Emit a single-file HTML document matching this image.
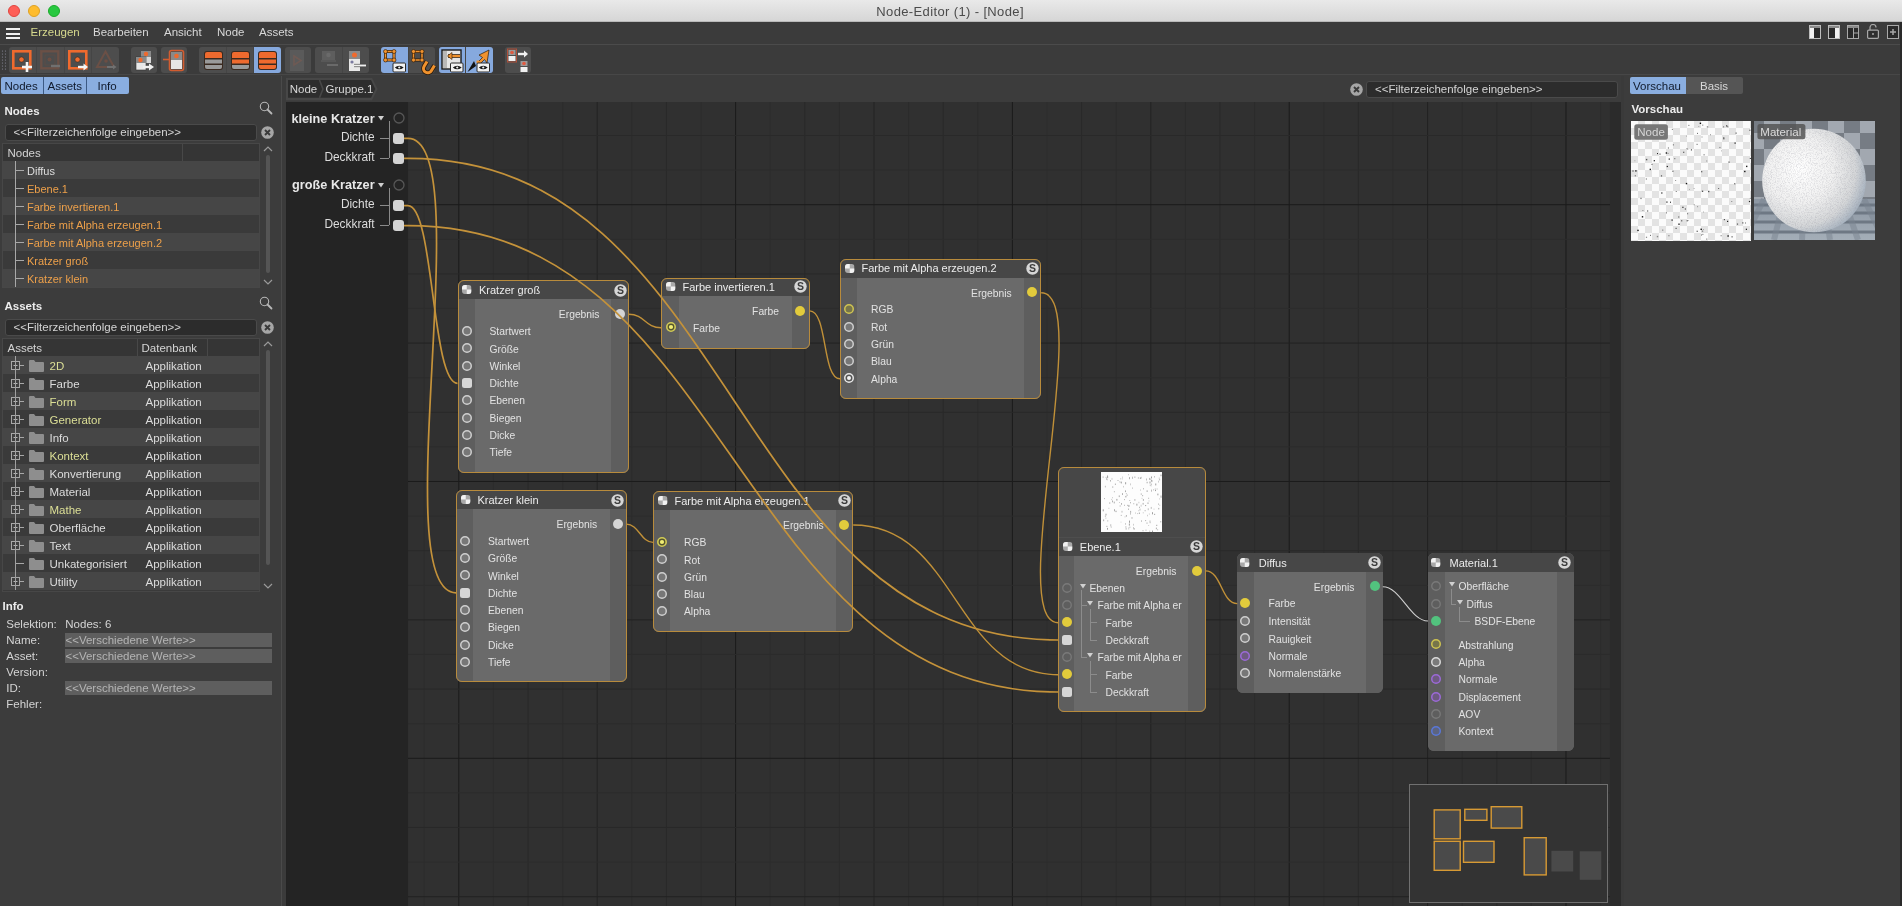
<!DOCTYPE html>
<html><head><meta charset="utf-8"><title>Node-Editor</title>
<style>
html,body{margin:0;padding:0;}
body{width:1902px;height:906px;overflow:hidden;position:relative;background:#3c3c3c;font-family:"Liberation Sans", sans-serif;}
div{box-sizing:border-box;}
#root{position:absolute;left:0;top:0;width:1902px;height:906px;overflow:hidden;will-change:transform;}
</style></head><body><div id="root">
<div style="position:absolute;left:0px;top:0px;width:1902px;height:22px;background:linear-gradient(#e9e9e9,#d6d6d6);border-bottom:1px solid #b9b9b9;"></div><div style="position:absolute;left:8px;top:5px;width:12px;height:12px;border-radius:50%;background:#fe5f57;border:0.5px solid #e0443e;"></div><div style="position:absolute;left:28px;top:5px;width:12px;height:12px;border-radius:50%;background:#febc2e;border:0.5px solid #dea123;"></div><div style="position:absolute;left:48px;top:5px;width:12px;height:12px;border-radius:50%;background:#28c840;border:0.5px solid #1aab29;"></div><div style="position:absolute;left:876.3px;top:4.50px;font-size:13px;line-height:13px;height:13px;color:#4b4b4b;font-weight:normal;white-space:nowrap;letter-spacing:0.37px;">Node-Editor (1) - [Node]</div><div style="position:absolute;left:0px;top:22px;width:1902px;height:22px;background:#3b3b3b;"></div><div style="position:absolute;left:6px;top:28px;width:14px;height:2px;background:#f0f0f0;"></div><div style="position:absolute;left:6px;top:32.5px;width:14px;height:2px;background:#f0f0f0;"></div><div style="position:absolute;left:6px;top:37px;width:14px;height:2px;background:#f0f0f0;"></div><div style="position:absolute;left:30.5px;top:27.17px;font-size:11.5px;line-height:11.5px;height:11.5px;color:#d6d98e;font-weight:normal;white-space:nowrap;">Erzeugen</div><div style="position:absolute;left:93px;top:27.17px;font-size:11.5px;line-height:11.5px;height:11.5px;color:#d8d8d8;font-weight:normal;white-space:nowrap;">Bearbeiten</div><div style="position:absolute;left:164px;top:27.17px;font-size:11.5px;line-height:11.5px;height:11.5px;color:#d8d8d8;font-weight:normal;white-space:nowrap;">Ansicht</div><div style="position:absolute;left:217px;top:27.17px;font-size:11.5px;line-height:11.5px;height:11.5px;color:#d8d8d8;font-weight:normal;white-space:nowrap;">Node</div><div style="position:absolute;left:259px;top:27.17px;font-size:11.5px;line-height:11.5px;height:11.5px;color:#d8d8d8;font-weight:normal;white-space:nowrap;">Assets</div><div style="position:absolute;left:0px;top:44px;width:1902px;height:1px;background:#4b4b4b;"></div><svg width="12" height="14" style="position:absolute;left:1809px;top:25px"><rect x="0.5" y="0.5" width="11" height="13" fill="#2a2a2a" stroke="#bdbdbd"/><rect x="1" y="1" width="10" height="2" fill="#8a8a8a"/><rect x="1" y="3" width="4" height="10" fill="#f2f2f2"/></svg><svg width="12" height="14" style="position:absolute;left:1828px;top:25px"><rect x="0.5" y="0.5" width="11" height="13" fill="#2a2a2a" stroke="#bdbdbd"/><rect x="1" y="1" width="10" height="2" fill="#8a8a8a"/><rect x="7" y="3" width="4" height="10" fill="#f2f2f2"/></svg><svg width="12" height="14" style="position:absolute;left:1847px;top:25px"><rect x="0.5" y="0.5" width="11" height="13" fill="#2a2a2a" stroke="#a8a8a8"/><line x1="6.5" y1="3" x2="6.5" y2="13" stroke="#a8a8a8"/><line x1="6.5" y1="8" x2="11" y2="8" stroke="#a8a8a8"/><rect x="1" y="1" width="10" height="2" fill="#8a8a8a"/></svg><svg width="12" height="15" style="position:absolute;left:1867px;top:24px"><path d="M3 6 V3.5 A3 3 0 0 1 9 3.5" fill="none" stroke="#a8a8a8" stroke-width="1.2"/><rect x="0.6" y="6.1" width="10.8" height="8.2" rx="1" fill="#2e2e2e" stroke="#a8a8a8" stroke-width="1.2"/><circle cx="6" cy="10" r="1" fill="#a8a8a8"/></svg><svg width="12" height="14" style="position:absolute;left:1887px;top:25px"><rect x="0.5" y="0.5" width="11" height="13" fill="#2a2a2a" stroke="#a8a8a8"/><path d="M6 4 V10 M3 7 H9" stroke="#a8a8a8" stroke-width="1.5"/></svg><div style="position:absolute;left:0px;top:45px;width:1902px;height:30px;background:#3b3b3b;"></div><div style="position:absolute;left:0px;top:74px;width:1902px;height:1px;background:#474747;"></div><svg width="6" height="22" style="position:absolute;left:1px;top:50px"><circle cx="1.5" cy="1" r="0.6" fill="#8a8a9a"/><circle cx="1.5" cy="4" r="0.6" fill="#8a8a9a"/><circle cx="1.5" cy="7" r="0.6" fill="#8a8a9a"/><circle cx="1.5" cy="10" r="0.6" fill="#8a8a9a"/><circle cx="1.5" cy="13" r="0.6" fill="#8a8a9a"/><circle cx="1.5" cy="16" r="0.6" fill="#8a8a9a"/><circle cx="1.5" cy="19" r="0.6" fill="#8a8a9a"/><circle cx="4.5" cy="1" r="0.6" fill="#8a8a9a"/><circle cx="4.5" cy="4" r="0.6" fill="#8a8a9a"/><circle cx="4.5" cy="7" r="0.6" fill="#8a8a9a"/><circle cx="4.5" cy="10" r="0.6" fill="#8a8a9a"/><circle cx="4.5" cy="13" r="0.6" fill="#8a8a9a"/><circle cx="4.5" cy="16" r="0.6" fill="#8a8a9a"/><circle cx="4.5" cy="19" r="0.6" fill="#8a8a9a"/></svg><div style="position:absolute;left:9px;top:47px;width:110px;height:26px;background:#4d4d4d;border-radius:3px;"></div><div style="position:absolute;left:36.0px;top:47px;width:1px;height:26px;background:#454545;"></div><div style="position:absolute;left:63.5px;top:47px;width:1px;height:26px;background:#454545;"></div><div style="position:absolute;left:91.0px;top:47px;width:1px;height:26px;background:#454545;"></div><div style="position:absolute;left:131px;top:47px;width:26px;height:26px;background:#4d4d4d;border-radius:3px;"></div><div style="position:absolute;left:161px;top:47px;width:26px;height:26px;background:#4d4d4d;border-radius:3px;"></div><div style="position:absolute;left:199px;top:47px;width:82px;height:26px;background:#4d4d4d;border-radius:3px;"></div><div style="position:absolute;left:225.83333333333334px;top:47px;width:1px;height:26px;background:#454545;"></div><div style="position:absolute;left:253.66666666666666px;top:47px;width:27.333333333333332px;height:26px;background:#86a9de;border-radius:0 3px 3px 0;"></div><div style="position:absolute;left:253.16666666666666px;top:47px;width:1px;height:26px;background:#454545;"></div><div style="position:absolute;left:284.5px;top:47px;width:26.0px;height:26px;background:#4d4d4d;border-radius:3px;"></div><div style="position:absolute;left:315px;top:47px;width:54px;height:26px;background:#4d4d4d;border-radius:3px;"></div><div style="position:absolute;left:341.5px;top:47px;width:1px;height:26px;background:#454545;"></div><div style="position:absolute;left:381px;top:47px;width:54px;height:26px;background:#4d4d4d;border-radius:3px;"></div><div style="position:absolute;left:381.0px;top:47px;width:27.0px;height:26px;background:#86a9de;border-radius:3px 0 0 3px;"></div><div style="position:absolute;left:407.5px;top:47px;width:1px;height:26px;background:#454545;"></div><div style="position:absolute;left:438.5px;top:47px;width:54.0px;height:26px;background:#4d4d4d;border-radius:3px;"></div><div style="position:absolute;left:438.5px;top:47px;width:27.0px;height:26px;background:#86a9de;border-radius:3px 0 0 3px;"></div><div style="position:absolute;left:465.5px;top:47px;width:27.0px;height:26px;background:#86a9de;border-radius:0 3px 3px 0;"></div><div style="position:absolute;left:465.0px;top:47px;width:1px;height:26px;background:#454545;"></div><div style="position:absolute;left:505px;top:47px;width:26px;height:26px;background:#4d4d4d;border-radius:3px;"></div><svg width="22" height="22" viewBox="0 0 22 22" style="position:absolute;left:12px;top:50px;overflow:visible"><rect x="1.3" y="1.3" width="17" height="17" fill="none" stroke="#ef6a2e" stroke-width="2.6"/><circle cx="9.5" cy="9.5" r="2.6" fill="#ef6a2e" stroke="#3a2a20" stroke-width="0.6"/><path d="M15 12 V22 M10 17 H20" stroke="#f4f4f4" stroke-width="2.6"/></svg><svg width="22" height="22" viewBox="0 0 22 22" style="position:absolute;left:40px;top:50px;overflow:visible"><rect x="1.3" y="1.3" width="17" height="17" fill="none" stroke="#6b5046" stroke-width="2.4"/><rect x="5" y="5" width="10" height="10" fill="none" stroke="#5c4d46" stroke-width="1"/><circle cx="9.5" cy="9.5" r="2" fill="#6b4e44"/><path d="M11 16 H20" stroke="#707070" stroke-width="2.4"/></svg><svg width="22" height="22" viewBox="0 0 22 22" style="position:absolute;left:68px;top:50px;overflow:visible"><rect x="1.3" y="1.3" width="17" height="17" fill="none" stroke="#ef6a2e" stroke-width="2.6"/><circle cx="9.5" cy="9.5" r="2.6" fill="#ef6a2e" stroke="#3a2a20" stroke-width="0.6"/><path d="M10 17 H17" stroke="#f4f4f4" stroke-width="2.4"/><path d="M15.5 13.5 L20 17 L15.5 20.5 Z" fill="#f4f4f4"/></svg><svg width="22" height="22" viewBox="0 0 22 22" style="position:absolute;left:96px;top:50px;overflow:visible"><path d="M9.5 1.5 L18 17 L1 17 Z" fill="none" stroke="#6b5046" stroke-width="2"/><circle cx="10" cy="11" r="1.8" fill="#6b4e44"/><path d="M11 17 H18" stroke="#707070" stroke-width="2"/><path d="M17 14.5 L20.5 17 L17 19.5 Z" fill="#707070"/></svg><svg width="20" height="22" viewBox="0 0 20 22" style="position:absolute;left:135px;top:50px;overflow:visible"><rect x="6" y="1" width="10" height="12" fill="#d8d8d8"/><rect x="6" y="1" width="10" height="6" fill="#8a8a8a"/><circle cx="11" cy="4" r="2.2" fill="#ef6a2e"/><rect x="1" y="7" width="10" height="13" fill="#e8e8e8" stroke="#333" stroke-width="0.6"/><rect x="1" y="7" width="10" height="6" fill="#8a8a8a"/><circle cx="5.5" cy="10" r="2.2" fill="#ef6a2e"/><path d="M8 17 H15" stroke="#f0f0f0" stroke-width="2.4"/><path d="M14 13.5 L19 17 L14 20.5 Z" fill="#f0f0f0"/></svg><svg width="24" height="24" viewBox="0 0 24 24" style="position:absolute;left:163px;top:49px;overflow:visible"><rect x="6.5" y="1.5" width="14" height="20" rx="2" fill="none" stroke="#d25c30" stroke-width="1.6"/><rect x="8" y="3" width="11" height="8" fill="#8a8a8a"/><rect x="8" y="11" width="11" height="9" fill="#e6e6e6"/><circle cx="13.5" cy="7" r="2.3" fill="#ef6a2e"/><path d="M0 10.5 H6" stroke="#d25c30" stroke-width="1.6"/></svg><svg width="21" height="21" viewBox="0 0 21 21" style="position:absolute;left:202.5px;top:50px;overflow:visible"><rect x="1" y="1" width="19" height="19" rx="3" fill="#3a2a20"/><path d="M2 4 a2 2 0 0 1 2 -2 h13 a2 2 0 0 1 2 2 v4 h-17z" fill="#ef6a2e"/><rect x="2" y="9.5" width="17" height="4" fill="#9a9a9a"/><path d="M2 15 h17 v2 a2 2 0 0 1 -2 2 h-13 a2 2 0 0 1 -2 -2z" fill="#9a9a9a"/></svg><svg width="21" height="21" viewBox="0 0 21 21" style="position:absolute;left:230px;top:50px;overflow:visible"><rect x="1" y="1" width="19" height="19" rx="3" fill="#3a2a20"/><path d="M2 4 a2 2 0 0 1 2 -2 h13 a2 2 0 0 1 2 2 v4 h-17z" fill="#ef6a2e"/><rect x="2" y="9.5" width="17" height="4" fill="#ef6a2e"/><path d="M2 15 h17 v2 a2 2 0 0 1 -2 2 h-13 a2 2 0 0 1 -2 -2z" fill="#9a9a9a"/></svg><svg width="21" height="21" viewBox="0 0 21 21" style="position:absolute;left:257px;top:50px;overflow:visible"><rect x="1" y="1" width="19" height="19" rx="3" fill="#3a2a20"/><path d="M2 4 a2 2 0 0 1 2 -2 h13 a2 2 0 0 1 2 2 v4 h-17z" fill="#ef6a2e"/><rect x="2" y="9.5" width="17" height="4" fill="#ef6a2e"/><path d="M2 15 h17 v2 a2 2 0 0 1 -2 2 h-13 a2 2 0 0 1 -2 -2z" fill="#ef6a2e"/></svg><svg width="16" height="22" viewBox="0 0 16 22" style="position:absolute;left:290px;top:50px;overflow:visible"><rect x="0" y="0" width="14" height="21" fill="#5a5a5a"/><path d="M4 6 L11 10.5 L4 15 Z" fill="none" stroke="#6e5a54" stroke-width="1.6"/></svg><svg width="20" height="22" viewBox="0 0 20 22" style="position:absolute;left:320px;top:50px;overflow:visible"><rect x="2" y="1" width="13" height="9" fill="#5e5e5e"/><circle cx="8.5" cy="5" r="2.3" fill="#6a6a6a"/><path d="M1 11 H16" stroke="#646464" stroke-width="1"/><path d="M7 15 H18" stroke="#6a6a6a" stroke-width="2"/></svg><svg width="20" height="22" viewBox="0 0 20 22" style="position:absolute;left:347px;top:50px;overflow:visible"><rect x="2" y="1" width="11" height="8" fill="#8a8a8a"/><circle cx="7.5" cy="5" r="2.5" fill="#ef6a2e"/><rect x="2" y="9" width="11" height="12" fill="#e8e8e8"/><circle cx="5" cy="12" r="1.6" fill="#7a7aa0"/><path d="M7 15.5 H19" stroke="#333" stroke-width="3.2"/><path d="M7 15.5 H19" stroke="#f0f0f0" stroke-width="2"/></svg><svg width="24" height="24" viewBox="0 0 24 24" style="position:absolute;left:383px;top:49px;overflow:visible"><rect x="2.5" y="2.5" width="8.5" height="8.5" fill="none" stroke="#2a1a0a" stroke-width="3"/><rect x="2.5" y="2.5" width="8.5" height="8.5" fill="none" stroke="#f0922e" stroke-width="1.6"/><circle cx="2.5" cy="2.5" r="2" fill="#f0922e" stroke="#2a1a0a" stroke-width="0.6"/><circle cx="11" cy="2.5" r="2" fill="#f0922e" stroke="#2a1a0a" stroke-width="0.6"/><circle cx="2.5" cy="11" r="2" fill="#f0922e" stroke="#2a1a0a" stroke-width="0.6"/><circle cx="11" cy="11" r="2" fill="#f0922e" stroke="#2a1a0a" stroke-width="0.6"/><rect x="10" y="14" width="12.5" height="9" rx="1" fill="#f2f2f2" stroke="#2a2a2a" stroke-width="1"/><path d="M11.8 18.5 Q16.25 14.8 20.7 18.5 Q16.25 22.2 11.8 18.5Z" fill="#1a1a1a"/><circle cx="16.25" cy="18.5" r="1.1" fill="#f2f2f2"/></svg><svg width="24" height="24" viewBox="0 0 24 24" style="position:absolute;left:411px;top:49px;overflow:visible"><rect x="2.5" y="2.5" width="8.5" height="8.5" fill="none" stroke="#2a1a0a" stroke-width="3"/><rect x="2.5" y="2.5" width="8.5" height="8.5" fill="none" stroke="#f0922e" stroke-width="1.6"/><circle cx="2.5" cy="2.5" r="2" fill="#f0922e" stroke="#2a1a0a" stroke-width="0.6"/><circle cx="11" cy="2.5" r="2" fill="#f0922e" stroke="#2a1a0a" stroke-width="0.6"/><circle cx="2.5" cy="11" r="2" fill="#f0922e" stroke="#2a1a0a" stroke-width="0.6"/><circle cx="11" cy="11" r="2" fill="#f0922e" stroke="#2a1a0a" stroke-width="0.6"/><path d="M16 12.5 L13 17.5 A4.2 4.2 0 0 0 20.5 21.5 L23.5 16.5" fill="none" stroke="#2a1a0a" stroke-width="4.6"/><path d="M16 12.5 L13 17.5 A4.2 4.2 0 0 0 20.5 21.5 L23.5 16.5" fill="none" stroke="#f0922e" stroke-width="3"/></svg><svg width="24" height="24" viewBox="0 0 24 24" style="position:absolute;left:441px;top:49px;overflow:visible"><rect x="1" y="1" width="19" height="19" fill="#e6e6e6" stroke="#1a1a1a" stroke-width="1.4"/><rect x="2" y="2" width="4" height="17" fill="#b8b8b8"/><path d="M7 7 H19" stroke="#2a1a0a" stroke-width="3.6"/><path d="M7 7 H19" stroke="#f0922e" stroke-width="2.2"/><path d="M11 3.5 L6.5 7 L11 10.5 Z" fill="#f0922e" stroke="#2a1a0a" stroke-width="0.6"/><rect x="9.5" y="14" width="12.5" height="9" rx="1" fill="#f2f2f2" stroke="#2a2a2a" stroke-width="1"/><path d="M11.8 18.5 Q16.25 14.8 20.7 18.5 Q16.25 22.2 11.8 18.5Z" fill="#1a1a1a"/><circle cx="16.25" cy="18.5" r="1.1" fill="#f2f2f2"/></svg><svg width="24" height="24" viewBox="0 0 24 24" style="position:absolute;left:467px;top:49px;overflow:visible"><path d="M22 1 L12 6 L15.5 8.5 L10 14 L12 16 L17.5 10.5 L20 14 Z" fill="#f0922e" stroke="#2a1a0a" stroke-width="0.7"/><rect x="9.5" y="11.5" width="2.5" height="2.5" fill="#f0922e"/><path d="M0.5 23 L7 12 L9 17 Z" fill="#111"/><rect x="10" y="14" width="12.5" height="9" rx="1" fill="#f2f2f2" stroke="#2a2a2a" stroke-width="1"/><path d="M11.8 18.5 Q16.25 14.8 20.7 18.5 Q16.25 22.2 11.8 18.5Z" fill="#1a1a1a"/><circle cx="16.25" cy="18.5" r="1.1" fill="#f2f2f2"/></svg><svg width="23" height="25" viewBox="0 0 23 25" style="position:absolute;left:507px;top:48px;overflow:visible"><rect x="0.5" y="1" width="9" height="13" fill="none" stroke="#b0503a" stroke-width="1"/><rect x="1.5" y="2" width="7" height="5" fill="#9a9a9a"/><circle cx="5" cy="4.5" r="1.8" fill="#e05a40"/><rect x="1.5" y="8" width="7" height="5" fill="#f0f0f0"/><path d="M11 6 H18" stroke="#f0f0f0" stroke-width="2.4"/><path d="M17 2.5 L21 6 L17 9.5 Z" fill="#f0f0f0"/><rect x="13.5" y="13" width="7" height="5" fill="#9a9a9a"/><circle cx="17" cy="15.5" r="1.8" fill="#e05a40"/><rect x="13.5" y="19" width="7" height="5" fill="#f0f0f0"/></svg><div style="position:absolute;left:0px;top:76px;width:281px;height:830px;background:#3c3c3c;"></div><div style="position:absolute;left:281px;top:76px;width:1px;height:830px;background:#4a4a4a;"></div><div style="position:absolute;left:282px;top:76px;width:4px;height:830px;background:#3b3b3b;"></div><div style="position:absolute;left:1px;top:77px;width:128px;height:17px;background:#8aaee0;border-radius:2px;"></div><div style="position:absolute;left:43px;top:77px;width:1px;height:17px;background:#3c5a84;"></div><div style="position:absolute;left:86px;top:77px;width:1px;height:17px;background:#3c5a84;"></div><div style="position:absolute;left:4.5px;top:80.87px;font-size:11.5px;line-height:11.5px;height:11.5px;color:#101a2c;font-weight:normal;white-space:nowrap;">Nodes</div><div style="position:absolute;left:47.5px;top:80.87px;font-size:11.5px;line-height:11.5px;height:11.5px;color:#101a2c;font-weight:normal;white-space:nowrap;">Assets</div><div style="position:absolute;left:97.5px;top:80.87px;font-size:11.5px;line-height:11.5px;height:11.5px;color:#101a2c;font-weight:normal;white-space:nowrap;">Info</div><div style="position:absolute;left:4.5px;top:105.77px;font-size:11.5px;line-height:11.5px;height:11.5px;color:#ececec;font-weight:bold;white-space:nowrap;">Nodes</div><svg width="14" height="14" viewBox="0 0 14 14" style="position:absolute;left:259px;top:101.0px;overflow:visible"><circle cx="5.5" cy="5.5" r="4.2" fill="none" stroke="#b8b8b8" stroke-width="1.1"/><path d="M8.5 8.5 L12.5 12.5" stroke="#b8b8b8" stroke-width="1.8" stroke-linecap="round"/></svg><div style="position:absolute;left:5px;top:123.5px;width:252px;height:17px;background:#2c2c2c;border:1px solid #4a4a4a;border-radius:3px;"></div><div style="position:absolute;left:13.5px;top:127.37px;font-size:11.5px;line-height:11.5px;height:11.5px;color:#d4d4d4;font-weight:normal;white-space:nowrap;">&lt;&lt;Filterzeichenfolge eingeben&gt;&gt;</div><svg width="13" height="13" viewBox="0 0 13 13" style="position:absolute;left:260.5px;top:125.5px;overflow:visible"><circle cx="6.5" cy="6.5" r="6.3" fill="#a6a6a6"/><path d="M4 4 L9 9 M9 4 L4 9" stroke="#3a3a3a" stroke-width="1.9"/></svg><div style="position:absolute;left:4.5px;top:300.77px;font-size:11.5px;line-height:11.5px;height:11.5px;color:#ececec;font-weight:bold;white-space:nowrap;">Assets</div><svg width="14" height="14" viewBox="0 0 14 14" style="position:absolute;left:259px;top:296.0px;overflow:visible"><circle cx="5.5" cy="5.5" r="4.2" fill="none" stroke="#b8b8b8" stroke-width="1.1"/><path d="M8.5 8.5 L12.5 12.5" stroke="#b8b8b8" stroke-width="1.8" stroke-linecap="round"/></svg><div style="position:absolute;left:5px;top:318.5px;width:252px;height:17px;background:#2c2c2c;border:1px solid #4a4a4a;border-radius:3px;"></div><div style="position:absolute;left:13.5px;top:322.37px;font-size:11.5px;line-height:11.5px;height:11.5px;color:#d4d4d4;font-weight:normal;white-space:nowrap;">&lt;&lt;Filterzeichenfolge eingeben&gt;&gt;</div><svg width="13" height="13" viewBox="0 0 13 13" style="position:absolute;left:260.5px;top:320.5px;overflow:visible"><circle cx="6.5" cy="6.5" r="6.3" fill="#a6a6a6"/><path d="M4 4 L9 9 M9 4 L4 9" stroke="#3a3a3a" stroke-width="1.9"/></svg><div style="position:absolute;left:2px;top:143px;width:258px;height:145px;background:#3a3a3a;border:1px solid #474747;"></div><div style="position:absolute;left:3px;top:144px;width:256px;height:17px;background:#353535;"></div><div style="position:absolute;left:182px;top:144px;width:1px;height:17px;background:#484848;"></div><div style="position:absolute;left:7.5px;top:147.67px;font-size:11.5px;line-height:11.5px;height:11.5px;color:#d4d4d4;font-weight:normal;white-space:nowrap;">Nodes</div><div style="position:absolute;left:3px;top:161px;width:256px;height:18px;background:#464646;"></div><div style="position:absolute;left:15px;top:170px;width:9px;height:1px;background:#a8a8a8;"></div><div style="position:absolute;left:27px;top:165.69px;font-size:11px;line-height:11px;height:11px;color:#dedede;font-weight:normal;white-space:nowrap;">Diffus</div><div style="position:absolute;left:3px;top:179px;width:256px;height:18px;background:#3a3a3a;"></div><div style="position:absolute;left:15px;top:188px;width:9px;height:1px;background:#a8a8a8;"></div><div style="position:absolute;left:27px;top:183.69px;font-size:11px;line-height:11px;height:11px;color:#eda04a;font-weight:normal;white-space:nowrap;">Ebene.1</div><div style="position:absolute;left:3px;top:197px;width:256px;height:18px;background:#464646;"></div><div style="position:absolute;left:15px;top:206px;width:9px;height:1px;background:#a8a8a8;"></div><div style="position:absolute;left:27px;top:201.69px;font-size:11px;line-height:11px;height:11px;color:#eda04a;font-weight:normal;white-space:nowrap;">Farbe invertieren.1</div><div style="position:absolute;left:3px;top:215px;width:256px;height:18px;background:#3a3a3a;"></div><div style="position:absolute;left:15px;top:224px;width:9px;height:1px;background:#a8a8a8;"></div><div style="position:absolute;left:27px;top:219.69px;font-size:11px;line-height:11px;height:11px;color:#eda04a;font-weight:normal;white-space:nowrap;">Farbe mit Alpha erzeugen.1</div><div style="position:absolute;left:3px;top:233px;width:256px;height:18px;background:#464646;"></div><div style="position:absolute;left:15px;top:242px;width:9px;height:1px;background:#a8a8a8;"></div><div style="position:absolute;left:27px;top:237.69px;font-size:11px;line-height:11px;height:11px;color:#eda04a;font-weight:normal;white-space:nowrap;">Farbe mit Alpha erzeugen.2</div><div style="position:absolute;left:3px;top:251px;width:256px;height:18px;background:#3a3a3a;"></div><div style="position:absolute;left:15px;top:260px;width:9px;height:1px;background:#a8a8a8;"></div><div style="position:absolute;left:27px;top:255.69px;font-size:11px;line-height:11px;height:11px;color:#eda04a;font-weight:normal;white-space:nowrap;">Kratzer groß</div><div style="position:absolute;left:3px;top:269px;width:256px;height:18px;background:#464646;"></div><div style="position:absolute;left:15px;top:278px;width:9px;height:1px;background:#a8a8a8;"></div><div style="position:absolute;left:27px;top:273.69px;font-size:11px;line-height:11px;height:11px;color:#eda04a;font-weight:normal;white-space:nowrap;">Kratzer klein</div><div style="position:absolute;left:15px;top:161px;width:1px;height:126px;background:#a8a8a8;"></div><svg width="12" height="10" viewBox="0 0 12 10" style="position:absolute;left:262px;top:144px;overflow:visible"><path d="M2 7 L6 3 L10 7" fill="none" stroke="#9a9a9a" stroke-width="1.2"/></svg><div style="position:absolute;left:265.5px;top:155px;width:4px;height:118px;background:#555;border-radius:2px;"></div><svg width="12" height="10" viewBox="0 0 12 10" style="position:absolute;left:262px;top:277px;overflow:visible"><path d="M2 3 L6 7 L10 3" fill="none" stroke="#9a9a9a" stroke-width="1.2"/></svg><div style="position:absolute;left:2px;top:338px;width:258px;height:254px;background:#3a3a3a;border:1px solid #474747;"></div><div style="position:absolute;left:3px;top:339px;width:256px;height:17px;background:#353535;"></div><div style="position:absolute;left:137px;top:339px;width:1px;height:17px;background:#484848;"></div><div style="position:absolute;left:207px;top:339px;width:1px;height:17px;background:#484848;"></div><div style="position:absolute;left:7.5px;top:342.67px;font-size:11.5px;line-height:11.5px;height:11.5px;color:#d4d4d4;font-weight:normal;white-space:nowrap;">Assets</div><div style="position:absolute;left:141.5px;top:342.67px;font-size:11.5px;line-height:11.5px;height:11.5px;color:#d4d4d4;font-weight:normal;white-space:nowrap;">Datenbank</div><div style="position:absolute;left:3px;top:356px;width:256px;height:18px;background:#464646;"></div><svg width="14" height="10" viewBox="0 0 14 10" style="position:absolute;left:10.5px;top:361px;overflow:visible"><rect x="0.5" y="0.5" width="8" height="8" fill="#3f3f3f" stroke="#a8a8a8" stroke-width="1"/><path d="M2.5 4.5 H6.5 M4.5 2.5 V6.5" stroke="#b8b8b8" stroke-width="1"/><path d="M9 4.5 H13" stroke="#a8a8a8" stroke-width="1"/></svg><svg width="15" height="12" viewBox="0 0 15 12" style="position:absolute;left:28.5px;top:360px;overflow:visible"><path d="M0 1 a1 1 0 0 1 1 -1 h4 l1.5 2 h7.5 a1 1 0 0 1 1 1 v8 a1 1 0 0 1 -1 1 h-13 a1 1 0 0 1 -1 -1z" fill="#8e8e8e"/></svg><div style="position:absolute;left:49.5px;top:360.87px;font-size:11.5px;line-height:11.5px;height:11.5px;color:#dcdf96;font-weight:normal;white-space:nowrap;">2D</div><div style="position:absolute;left:145.5px;top:360.87px;font-size:11.5px;line-height:11.5px;height:11.5px;color:#dcdcdc;font-weight:normal;white-space:nowrap;">Applikation</div><div style="position:absolute;left:3px;top:374px;width:256px;height:18px;background:#3a3a3a;"></div><svg width="14" height="10" viewBox="0 0 14 10" style="position:absolute;left:10.5px;top:379px;overflow:visible"><rect x="0.5" y="0.5" width="8" height="8" fill="#3f3f3f" stroke="#a8a8a8" stroke-width="1"/><path d="M2.5 4.5 H6.5 M4.5 2.5 V6.5" stroke="#b8b8b8" stroke-width="1"/><path d="M9 4.5 H13" stroke="#a8a8a8" stroke-width="1"/></svg><svg width="15" height="12" viewBox="0 0 15 12" style="position:absolute;left:28.5px;top:378px;overflow:visible"><path d="M0 1 a1 1 0 0 1 1 -1 h4 l1.5 2 h7.5 a1 1 0 0 1 1 1 v8 a1 1 0 0 1 -1 1 h-13 a1 1 0 0 1 -1 -1z" fill="#8e8e8e"/></svg><div style="position:absolute;left:49.5px;top:378.87px;font-size:11.5px;line-height:11.5px;height:11.5px;color:#dcdcdc;font-weight:normal;white-space:nowrap;">Farbe</div><div style="position:absolute;left:145.5px;top:378.87px;font-size:11.5px;line-height:11.5px;height:11.5px;color:#dcdcdc;font-weight:normal;white-space:nowrap;">Applikation</div><div style="position:absolute;left:3px;top:392px;width:256px;height:18px;background:#464646;"></div><svg width="14" height="10" viewBox="0 0 14 10" style="position:absolute;left:10.5px;top:397px;overflow:visible"><rect x="0.5" y="0.5" width="8" height="8" fill="#3f3f3f" stroke="#a8a8a8" stroke-width="1"/><path d="M2.5 4.5 H6.5 M4.5 2.5 V6.5" stroke="#b8b8b8" stroke-width="1"/><path d="M9 4.5 H13" stroke="#a8a8a8" stroke-width="1"/></svg><svg width="15" height="12" viewBox="0 0 15 12" style="position:absolute;left:28.5px;top:396px;overflow:visible"><path d="M0 1 a1 1 0 0 1 1 -1 h4 l1.5 2 h7.5 a1 1 0 0 1 1 1 v8 a1 1 0 0 1 -1 1 h-13 a1 1 0 0 1 -1 -1z" fill="#8e8e8e"/></svg><div style="position:absolute;left:49.5px;top:396.87px;font-size:11.5px;line-height:11.5px;height:11.5px;color:#dcdf96;font-weight:normal;white-space:nowrap;">Form</div><div style="position:absolute;left:145.5px;top:396.87px;font-size:11.5px;line-height:11.5px;height:11.5px;color:#dcdcdc;font-weight:normal;white-space:nowrap;">Applikation</div><div style="position:absolute;left:3px;top:410px;width:256px;height:18px;background:#3a3a3a;"></div><svg width="14" height="10" viewBox="0 0 14 10" style="position:absolute;left:10.5px;top:415px;overflow:visible"><rect x="0.5" y="0.5" width="8" height="8" fill="#3f3f3f" stroke="#a8a8a8" stroke-width="1"/><path d="M2.5 4.5 H6.5 M4.5 2.5 V6.5" stroke="#b8b8b8" stroke-width="1"/><path d="M9 4.5 H13" stroke="#a8a8a8" stroke-width="1"/></svg><svg width="15" height="12" viewBox="0 0 15 12" style="position:absolute;left:28.5px;top:414px;overflow:visible"><path d="M0 1 a1 1 0 0 1 1 -1 h4 l1.5 2 h7.5 a1 1 0 0 1 1 1 v8 a1 1 0 0 1 -1 1 h-13 a1 1 0 0 1 -1 -1z" fill="#8e8e8e"/></svg><div style="position:absolute;left:49.5px;top:414.87px;font-size:11.5px;line-height:11.5px;height:11.5px;color:#dcdf96;font-weight:normal;white-space:nowrap;">Generator</div><div style="position:absolute;left:145.5px;top:414.87px;font-size:11.5px;line-height:11.5px;height:11.5px;color:#dcdcdc;font-weight:normal;white-space:nowrap;">Applikation</div><div style="position:absolute;left:3px;top:428px;width:256px;height:18px;background:#464646;"></div><svg width="14" height="10" viewBox="0 0 14 10" style="position:absolute;left:10.5px;top:433px;overflow:visible"><rect x="0.5" y="0.5" width="8" height="8" fill="#3f3f3f" stroke="#a8a8a8" stroke-width="1"/><path d="M2.5 4.5 H6.5 M4.5 2.5 V6.5" stroke="#b8b8b8" stroke-width="1"/><path d="M9 4.5 H13" stroke="#a8a8a8" stroke-width="1"/></svg><svg width="15" height="12" viewBox="0 0 15 12" style="position:absolute;left:28.5px;top:432px;overflow:visible"><path d="M0 1 a1 1 0 0 1 1 -1 h4 l1.5 2 h7.5 a1 1 0 0 1 1 1 v8 a1 1 0 0 1 -1 1 h-13 a1 1 0 0 1 -1 -1z" fill="#8e8e8e"/></svg><div style="position:absolute;left:49.5px;top:432.87px;font-size:11.5px;line-height:11.5px;height:11.5px;color:#dcdcdc;font-weight:normal;white-space:nowrap;">Info</div><div style="position:absolute;left:145.5px;top:432.87px;font-size:11.5px;line-height:11.5px;height:11.5px;color:#dcdcdc;font-weight:normal;white-space:nowrap;">Applikation</div><div style="position:absolute;left:3px;top:446px;width:256px;height:18px;background:#3a3a3a;"></div><svg width="14" height="10" viewBox="0 0 14 10" style="position:absolute;left:10.5px;top:451px;overflow:visible"><rect x="0.5" y="0.5" width="8" height="8" fill="#3f3f3f" stroke="#a8a8a8" stroke-width="1"/><path d="M2.5 4.5 H6.5 M4.5 2.5 V6.5" stroke="#b8b8b8" stroke-width="1"/><path d="M9 4.5 H13" stroke="#a8a8a8" stroke-width="1"/></svg><svg width="15" height="12" viewBox="0 0 15 12" style="position:absolute;left:28.5px;top:450px;overflow:visible"><path d="M0 1 a1 1 0 0 1 1 -1 h4 l1.5 2 h7.5 a1 1 0 0 1 1 1 v8 a1 1 0 0 1 -1 1 h-13 a1 1 0 0 1 -1 -1z" fill="#8e8e8e"/></svg><div style="position:absolute;left:49.5px;top:450.87px;font-size:11.5px;line-height:11.5px;height:11.5px;color:#dcdf96;font-weight:normal;white-space:nowrap;">Kontext</div><div style="position:absolute;left:145.5px;top:450.87px;font-size:11.5px;line-height:11.5px;height:11.5px;color:#dcdcdc;font-weight:normal;white-space:nowrap;">Applikation</div><div style="position:absolute;left:3px;top:464px;width:256px;height:18px;background:#464646;"></div><svg width="14" height="10" viewBox="0 0 14 10" style="position:absolute;left:10.5px;top:469px;overflow:visible"><rect x="0.5" y="0.5" width="8" height="8" fill="#3f3f3f" stroke="#a8a8a8" stroke-width="1"/><path d="M2.5 4.5 H6.5 M4.5 2.5 V6.5" stroke="#b8b8b8" stroke-width="1"/><path d="M9 4.5 H13" stroke="#a8a8a8" stroke-width="1"/></svg><svg width="15" height="12" viewBox="0 0 15 12" style="position:absolute;left:28.5px;top:468px;overflow:visible"><path d="M0 1 a1 1 0 0 1 1 -1 h4 l1.5 2 h7.5 a1 1 0 0 1 1 1 v8 a1 1 0 0 1 -1 1 h-13 a1 1 0 0 1 -1 -1z" fill="#8e8e8e"/></svg><div style="position:absolute;left:49.5px;top:468.87px;font-size:11.5px;line-height:11.5px;height:11.5px;color:#dcdcdc;font-weight:normal;white-space:nowrap;">Konvertierung</div><div style="position:absolute;left:145.5px;top:468.87px;font-size:11.5px;line-height:11.5px;height:11.5px;color:#dcdcdc;font-weight:normal;white-space:nowrap;">Applikation</div><div style="position:absolute;left:3px;top:482px;width:256px;height:18px;background:#3a3a3a;"></div><svg width="14" height="10" viewBox="0 0 14 10" style="position:absolute;left:10.5px;top:487px;overflow:visible"><rect x="0.5" y="0.5" width="8" height="8" fill="#3f3f3f" stroke="#a8a8a8" stroke-width="1"/><path d="M2.5 4.5 H6.5 M4.5 2.5 V6.5" stroke="#b8b8b8" stroke-width="1"/><path d="M9 4.5 H13" stroke="#a8a8a8" stroke-width="1"/></svg><svg width="15" height="12" viewBox="0 0 15 12" style="position:absolute;left:28.5px;top:486px;overflow:visible"><path d="M0 1 a1 1 0 0 1 1 -1 h4 l1.5 2 h7.5 a1 1 0 0 1 1 1 v8 a1 1 0 0 1 -1 1 h-13 a1 1 0 0 1 -1 -1z" fill="#8e8e8e"/></svg><div style="position:absolute;left:49.5px;top:486.87px;font-size:11.5px;line-height:11.5px;height:11.5px;color:#dcdcdc;font-weight:normal;white-space:nowrap;">Material</div><div style="position:absolute;left:145.5px;top:486.87px;font-size:11.5px;line-height:11.5px;height:11.5px;color:#dcdcdc;font-weight:normal;white-space:nowrap;">Applikation</div><div style="position:absolute;left:3px;top:500px;width:256px;height:18px;background:#464646;"></div><svg width="14" height="10" viewBox="0 0 14 10" style="position:absolute;left:10.5px;top:505px;overflow:visible"><rect x="0.5" y="0.5" width="8" height="8" fill="#3f3f3f" stroke="#a8a8a8" stroke-width="1"/><path d="M2.5 4.5 H6.5 M4.5 2.5 V6.5" stroke="#b8b8b8" stroke-width="1"/><path d="M9 4.5 H13" stroke="#a8a8a8" stroke-width="1"/></svg><svg width="15" height="12" viewBox="0 0 15 12" style="position:absolute;left:28.5px;top:504px;overflow:visible"><path d="M0 1 a1 1 0 0 1 1 -1 h4 l1.5 2 h7.5 a1 1 0 0 1 1 1 v8 a1 1 0 0 1 -1 1 h-13 a1 1 0 0 1 -1 -1z" fill="#8e8e8e"/></svg><div style="position:absolute;left:49.5px;top:504.87px;font-size:11.5px;line-height:11.5px;height:11.5px;color:#dcdf96;font-weight:normal;white-space:nowrap;">Mathe</div><div style="position:absolute;left:145.5px;top:504.87px;font-size:11.5px;line-height:11.5px;height:11.5px;color:#dcdcdc;font-weight:normal;white-space:nowrap;">Applikation</div><div style="position:absolute;left:3px;top:518px;width:256px;height:18px;background:#3a3a3a;"></div><svg width="14" height="10" viewBox="0 0 14 10" style="position:absolute;left:10.5px;top:523px;overflow:visible"><rect x="0.5" y="0.5" width="8" height="8" fill="#3f3f3f" stroke="#a8a8a8" stroke-width="1"/><path d="M2.5 4.5 H6.5 M4.5 2.5 V6.5" stroke="#b8b8b8" stroke-width="1"/><path d="M9 4.5 H13" stroke="#a8a8a8" stroke-width="1"/></svg><svg width="15" height="12" viewBox="0 0 15 12" style="position:absolute;left:28.5px;top:522px;overflow:visible"><path d="M0 1 a1 1 0 0 1 1 -1 h4 l1.5 2 h7.5 a1 1 0 0 1 1 1 v8 a1 1 0 0 1 -1 1 h-13 a1 1 0 0 1 -1 -1z" fill="#8e8e8e"/></svg><div style="position:absolute;left:49.5px;top:522.87px;font-size:11.5px;line-height:11.5px;height:11.5px;color:#dcdcdc;font-weight:normal;white-space:nowrap;">Oberfläche</div><div style="position:absolute;left:145.5px;top:522.87px;font-size:11.5px;line-height:11.5px;height:11.5px;color:#dcdcdc;font-weight:normal;white-space:nowrap;">Applikation</div><div style="position:absolute;left:3px;top:536px;width:256px;height:18px;background:#464646;"></div><svg width="14" height="10" viewBox="0 0 14 10" style="position:absolute;left:10.5px;top:541px;overflow:visible"><rect x="0.5" y="0.5" width="8" height="8" fill="#3f3f3f" stroke="#a8a8a8" stroke-width="1"/><path d="M2.5 4.5 H6.5 M4.5 2.5 V6.5" stroke="#b8b8b8" stroke-width="1"/><path d="M9 4.5 H13" stroke="#a8a8a8" stroke-width="1"/></svg><svg width="15" height="12" viewBox="0 0 15 12" style="position:absolute;left:28.5px;top:540px;overflow:visible"><path d="M0 1 a1 1 0 0 1 1 -1 h4 l1.5 2 h7.5 a1 1 0 0 1 1 1 v8 a1 1 0 0 1 -1 1 h-13 a1 1 0 0 1 -1 -1z" fill="#8e8e8e"/></svg><div style="position:absolute;left:49.5px;top:540.87px;font-size:11.5px;line-height:11.5px;height:11.5px;color:#dcdcdc;font-weight:normal;white-space:nowrap;">Text</div><div style="position:absolute;left:145.5px;top:540.87px;font-size:11.5px;line-height:11.5px;height:11.5px;color:#dcdcdc;font-weight:normal;white-space:nowrap;">Applikation</div><div style="position:absolute;left:3px;top:554px;width:256px;height:18px;background:#3a3a3a;"></div><div style="position:absolute;left:15px;top:563px;width:9px;height:1px;background:#a8a8a8;"></div><svg width="15" height="12" viewBox="0 0 15 12" style="position:absolute;left:28.5px;top:558px;overflow:visible"><path d="M0 1 a1 1 0 0 1 1 -1 h4 l1.5 2 h7.5 a1 1 0 0 1 1 1 v8 a1 1 0 0 1 -1 1 h-13 a1 1 0 0 1 -1 -1z" fill="#8e8e8e"/></svg><div style="position:absolute;left:49.5px;top:558.87px;font-size:11.5px;line-height:11.5px;height:11.5px;color:#dcdcdc;font-weight:normal;white-space:nowrap;">Unkategorisiert</div><div style="position:absolute;left:145.5px;top:558.87px;font-size:11.5px;line-height:11.5px;height:11.5px;color:#dcdcdc;font-weight:normal;white-space:nowrap;">Applikation</div><div style="position:absolute;left:3px;top:572px;width:256px;height:18px;background:#464646;"></div><svg width="14" height="10" viewBox="0 0 14 10" style="position:absolute;left:10.5px;top:577px;overflow:visible"><rect x="0.5" y="0.5" width="8" height="8" fill="#3f3f3f" stroke="#a8a8a8" stroke-width="1"/><path d="M2.5 4.5 H6.5 M4.5 2.5 V6.5" stroke="#b8b8b8" stroke-width="1"/><path d="M9 4.5 H13" stroke="#a8a8a8" stroke-width="1"/></svg><svg width="15" height="12" viewBox="0 0 15 12" style="position:absolute;left:28.5px;top:576px;overflow:visible"><path d="M0 1 a1 1 0 0 1 1 -1 h4 l1.5 2 h7.5 a1 1 0 0 1 1 1 v8 a1 1 0 0 1 -1 1 h-13 a1 1 0 0 1 -1 -1z" fill="#8e8e8e"/></svg><div style="position:absolute;left:49.5px;top:576.87px;font-size:11.5px;line-height:11.5px;height:11.5px;color:#dcdcdc;font-weight:normal;white-space:nowrap;">Utility</div><div style="position:absolute;left:145.5px;top:576.87px;font-size:11.5px;line-height:11.5px;height:11.5px;color:#dcdcdc;font-weight:normal;white-space:nowrap;">Applikation</div><div style="position:absolute;left:15px;top:356px;width:1px;height:234px;background:#a0a0a0;"></div><svg width="12" height="10" viewBox="0 0 12 10" style="position:absolute;left:262px;top:339px;overflow:visible"><path d="M2 7 L6 3 L10 7" fill="none" stroke="#9a9a9a" stroke-width="1.2"/></svg><div style="position:absolute;left:265.5px;top:350px;width:4px;height:215px;background:#555;border-radius:2px;"></div><svg width="12" height="10" viewBox="0 0 12 10" style="position:absolute;left:262px;top:581px;overflow:visible"><path d="M2 3 L6 7 L10 3" fill="none" stroke="#9a9a9a" stroke-width="1.2"/></svg><div style="position:absolute;left:2.5px;top:600.67px;font-size:11.5px;line-height:11.5px;height:11.5px;color:#ececec;font-weight:bold;white-space:nowrap;">Info</div><div style="position:absolute;left:6.3px;top:618.57px;font-size:11.5px;line-height:11.5px;height:11.5px;color:#d4d4d4;font-weight:normal;white-space:nowrap;">Selektion:</div><div style="position:absolute;left:65.3px;top:618.57px;font-size:11.5px;line-height:11.5px;height:11.5px;color:#d4d4d4;font-weight:normal;white-space:nowrap;">Nodes: 6</div><div style="position:absolute;left:6.3px;top:634.57px;font-size:11.5px;line-height:11.5px;height:11.5px;color:#d4d4d4;font-weight:normal;white-space:nowrap;">Name:</div><div style="position:absolute;left:65px;top:633.3px;width:207px;height:14px;background:#5e5e5e;"></div><div style="position:absolute;left:65.5px;top:634.57px;font-size:11.5px;line-height:11.5px;height:11.5px;color:#b4b4b4;font-weight:normal;white-space:nowrap;">&lt;&lt;Verschiedene Werte&gt;&gt;</div><div style="position:absolute;left:6.3px;top:650.57px;font-size:11.5px;line-height:11.5px;height:11.5px;color:#d4d4d4;font-weight:normal;white-space:nowrap;">Asset:</div><div style="position:absolute;left:65px;top:649.3px;width:207px;height:14px;background:#5e5e5e;"></div><div style="position:absolute;left:65.5px;top:650.57px;font-size:11.5px;line-height:11.5px;height:11.5px;color:#b4b4b4;font-weight:normal;white-space:nowrap;">&lt;&lt;Verschiedene Werte&gt;&gt;</div><div style="position:absolute;left:6.3px;top:666.77px;font-size:11.5px;line-height:11.5px;height:11.5px;color:#d4d4d4;font-weight:normal;white-space:nowrap;">Version:</div><div style="position:absolute;left:6.3px;top:682.57px;font-size:11.5px;line-height:11.5px;height:11.5px;color:#d4d4d4;font-weight:normal;white-space:nowrap;">ID:</div><div style="position:absolute;left:65px;top:681.3px;width:207px;height:14px;background:#5e5e5e;"></div><div style="position:absolute;left:65.5px;top:682.57px;font-size:11.5px;line-height:11.5px;height:11.5px;color:#b4b4b4;font-weight:normal;white-space:nowrap;">&lt;&lt;Verschiedene Werte&gt;&gt;</div><div style="position:absolute;left:6.3px;top:698.67px;font-size:11.5px;line-height:11.5px;height:11.5px;color:#d4d4d4;font-weight:normal;white-space:nowrap;">Fehler:</div><div style="position:absolute;left:286px;top:76px;width:1336px;height:25px;background:#3c3c3c;"></div><svg width="95" height="23" viewBox="0 0 95 23" style="position:absolute;left:286px;top:78px;overflow:visible"><path d="M0 0 H86 L91.5 11.1 L86 22.3 H0 Z" fill="#474747"/><path d="M2 2 H85 L89.3 11.1 L85 19.7 H2 Z" fill="#2d2d2d"/><path d="M33.5 2 L37 11.1 L33.5 19.7" fill="none" stroke="#474747" stroke-width="1.6"/></svg><div style="position:absolute;left:289.7px;top:83.57px;font-size:11.5px;line-height:11.5px;height:11.5px;color:#d8d8d8;font-weight:normal;white-space:nowrap;">Node</div><div style="position:absolute;left:325.5px;top:83.57px;font-size:11.5px;line-height:11.5px;height:11.5px;color:#d8d8d8;font-weight:normal;white-space:nowrap;">Gruppe.1</div><svg width="13" height="13" viewBox="0 0 13 13" style="position:absolute;left:1349.5px;top:82.5px;overflow:visible"><circle cx="6.5" cy="6.5" r="6.3" fill="#a6a6a6"/><path d="M4 4 L9 9 M9 4 L4 9" stroke="#3a3a3a" stroke-width="1.9"/></svg><div style="position:absolute;left:1366px;top:80.5px;width:252px;height:17px;background:#2c2c2c;border:1px solid #4a4a4a;border-radius:3px;"></div><div style="position:absolute;left:1375px;top:83.77px;font-size:11.5px;line-height:11.5px;height:11.5px;color:#d4d4d4;font-weight:normal;white-space:nowrap;">&lt;&lt;Filterzeichenfolge eingeben&gt;&gt;</div><svg width="1324" height="804.4" viewBox="0 0 1324 804.4" style="position:absolute;left:286px;top:101.6px;overflow:visible"><rect x="0" y="0" width="1324" height="804.4" fill="#303030"/><rect x="33.9" y="0" width="1" height="804.4" fill="#222222"/><rect x="68.5" y="0" width="1" height="804.4" fill="#2c2c2c"/><rect x="103.1" y="0" width="1" height="804.4" fill="#292929"/><rect x="137.7" y="0" width="1" height="804.4" fill="#2c2c2c"/><rect x="172.3" y="0" width="1" height="804.4" fill="#1b1b1b"/><rect x="206.9" y="0" width="1" height="804.4" fill="#2c2c2c"/><rect x="241.5" y="0" width="1" height="804.4" fill="#292929"/><rect x="276.1" y="0" width="1" height="804.4" fill="#2c2c2c"/><rect x="310.7" y="0" width="1" height="804.4" fill="#222222"/><rect x="345.3" y="0" width="1" height="804.4" fill="#2c2c2c"/><rect x="379.9" y="0" width="1" height="804.4" fill="#292929"/><rect x="414.5" y="0" width="1" height="804.4" fill="#2c2c2c"/><rect x="449.1" y="0" width="1" height="804.4" fill="#1b1b1b"/><rect x="483.7" y="0" width="1" height="804.4" fill="#2c2c2c"/><rect x="518.3" y="0" width="1" height="804.4" fill="#292929"/><rect x="552.9" y="0" width="1" height="804.4" fill="#2c2c2c"/><rect x="587.5" y="0" width="1" height="804.4" fill="#222222"/><rect x="622.1" y="0" width="1" height="804.4" fill="#2c2c2c"/><rect x="656.7" y="0" width="1" height="804.4" fill="#292929"/><rect x="691.3" y="0" width="1" height="804.4" fill="#2c2c2c"/><rect x="725.9" y="0" width="1" height="804.4" fill="#1b1b1b"/><rect x="760.5" y="0" width="1" height="804.4" fill="#2c2c2c"/><rect x="795.1" y="0" width="1" height="804.4" fill="#292929"/><rect x="829.7" y="0" width="1" height="804.4" fill="#2c2c2c"/><rect x="864.3" y="0" width="1" height="804.4" fill="#222222"/><rect x="898.9" y="0" width="1" height="804.4" fill="#2c2c2c"/><rect x="933.5" y="0" width="1" height="804.4" fill="#292929"/><rect x="968.1" y="0" width="1" height="804.4" fill="#2c2c2c"/><rect x="1002.7" y="0" width="1" height="804.4" fill="#1b1b1b"/><rect x="1037.3" y="0" width="1" height="804.4" fill="#2c2c2c"/><rect x="1071.9" y="0" width="1" height="804.4" fill="#292929"/><rect x="1106.5" y="0" width="1" height="804.4" fill="#2c2c2c"/><rect x="1141.1" y="0" width="1" height="804.4" fill="#222222"/><rect x="1175.7" y="0" width="1" height="804.4" fill="#2c2c2c"/><rect x="1210.3" y="0" width="1" height="804.4" fill="#292929"/><rect x="1244.9" y="0" width="1" height="804.4" fill="#2c2c2c"/><rect x="1279.5" y="0" width="1" height="804.4" fill="#1b1b1b"/><rect x="1314.1" y="0" width="1" height="804.4" fill="#2c2c2c"/><rect x="0" y="33.0" width="1324" height="1" fill="#292929"/><rect x="0" y="67.6" width="1324" height="1" fill="#2c2c2c"/><rect x="0" y="102.2" width="1324" height="1" fill="#1b1b1b"/><rect x="0" y="136.8" width="1324" height="1" fill="#2c2c2c"/><rect x="0" y="171.4" width="1324" height="1" fill="#292929"/><rect x="0" y="206.0" width="1324" height="1" fill="#2c2c2c"/><rect x="0" y="240.6" width="1324" height="1" fill="#222222"/><rect x="0" y="275.2" width="1324" height="1" fill="#2c2c2c"/><rect x="0" y="309.8" width="1324" height="1" fill="#292929"/><rect x="0" y="344.4" width="1324" height="1" fill="#2c2c2c"/><rect x="0" y="379.0" width="1324" height="1" fill="#1b1b1b"/><rect x="0" y="413.6" width="1324" height="1" fill="#2c2c2c"/><rect x="0" y="448.2" width="1324" height="1" fill="#292929"/><rect x="0" y="482.8" width="1324" height="1" fill="#2c2c2c"/><rect x="0" y="517.4" width="1324" height="1" fill="#222222"/><rect x="0" y="552.0" width="1324" height="1" fill="#2c2c2c"/><rect x="0" y="586.6" width="1324" height="1" fill="#292929"/><rect x="0" y="621.2" width="1324" height="1" fill="#2c2c2c"/><rect x="0" y="655.8" width="1324" height="1" fill="#1b1b1b"/><rect x="0" y="690.4" width="1324" height="1" fill="#2c2c2c"/><rect x="0" y="725.0" width="1324" height="1" fill="#292929"/><rect x="0" y="759.6" width="1324" height="1" fill="#2c2c2c"/><rect x="0" y="794.2" width="1324" height="1" fill="#222222"/><rect x="0" y="0" width="122" height="804.4" fill="#242424"/></svg><div style="position:absolute;left:1610px;top:101.6px;width:11px;height:805px;background:#2b2b2b;"></div><div style="position:absolute;left:1621px;top:76px;width:2.7px;height:830px;background:#3a3a3a;"></div><div style="position:absolute;left:1623.7px;top:76px;width:1.3px;height:830px;background:#474747;"></div><div style="position:absolute;right:1527.4px;top:112.75px;font-size:12.7px;line-height:12.7px;height:12.7px;color:#e8e8e8;font-weight:bold;white-space:nowrap;text-align:right;">kleine Kratzer</div><svg width="7" height="5" viewBox="0 0 7 5" style="position:absolute;left:377.5px;top:115.8px;overflow:visible"><path d="M0 0 H6 L3 4.5 Z" fill="#d0d0d0"/></svg><svg width="12" height="12" viewBox="0 0 12 12" style="position:absolute;left:392.5px;top:112.10000000000001px;overflow:visible"><circle cx="6" cy="6" r="5" fill="none" stroke="#575757" stroke-width="1.3"/></svg><div style="position:absolute;left:389.2px;top:121.4px;width:1px;height:36.599999999999994px;background:#8a8a8a;"></div><div style="position:absolute;right:1527.4px;top:131.93px;font-size:11.9px;line-height:11.9px;height:11.9px;color:#dcdcdc;font-weight:normal;white-space:nowrap;text-align:right;">Dichte</div><div style="position:absolute;left:380.3px;top:138px;width:9px;height:1px;background:#8a8a8a;"></div><div style="position:absolute;left:393px;top:133px;width:11px;height:11px;background:#d4d4d4;border-radius:3px;"></div><div style="position:absolute;right:1527.4px;top:151.93px;font-size:11.9px;line-height:11.9px;height:11.9px;color:#dcdcdc;font-weight:normal;white-space:nowrap;text-align:right;">Deckkraft</div><div style="position:absolute;left:380.3px;top:158px;width:9px;height:1px;background:#8a8a8a;"></div><div style="position:absolute;left:393px;top:153px;width:11px;height:11px;background:#d4d4d4;border-radius:3px;"></div><div style="position:absolute;right:1527.4px;top:179.45px;font-size:12.7px;line-height:12.7px;height:12.7px;color:#e8e8e8;font-weight:bold;white-space:nowrap;text-align:right;">große Kratzer</div><svg width="7" height="5" viewBox="0 0 7 5" style="position:absolute;left:377.5px;top:182.5px;overflow:visible"><path d="M0 0 H6 L3 4.5 Z" fill="#d0d0d0"/></svg><svg width="12" height="12" viewBox="0 0 12 12" style="position:absolute;left:392.5px;top:178.79999999999998px;overflow:visible"><circle cx="6" cy="6" r="5" fill="none" stroke="#575757" stroke-width="1.3"/></svg><div style="position:absolute;left:389.2px;top:188.1px;width:1px;height:37.099999999999994px;background:#8a8a8a;"></div><div style="position:absolute;right:1527.4px;top:199.13px;font-size:11.9px;line-height:11.9px;height:11.9px;color:#dcdcdc;font-weight:normal;white-space:nowrap;text-align:right;">Dichte</div><div style="position:absolute;left:380.3px;top:205.2px;width:9px;height:1px;background:#8a8a8a;"></div><div style="position:absolute;left:393px;top:200.2px;width:11px;height:11px;background:#d4d4d4;border-radius:3px;"></div><div style="position:absolute;right:1527.4px;top:219.13px;font-size:11.9px;line-height:11.9px;height:11.9px;color:#dcdcdc;font-weight:normal;white-space:nowrap;text-align:right;">Deckkraft</div><div style="position:absolute;left:380.3px;top:225.2px;width:9px;height:1px;background:#8a8a8a;"></div><div style="position:absolute;left:393px;top:220.2px;width:11px;height:11px;background:#d4d4d4;border-radius:3px;"></div><div style="position:absolute;left:457.5px;top:280.2px;width:171.29999999999995px;height:193.2px;background:#6a6a6a;border-radius:6px;overflow:hidden;"><div style="position:absolute;left:0px;top:0px;width:171.29999999999995px;height:19.19999999999999px;background:#474747;"></div><div style="position:absolute;left:0px;top:19.19999999999999px;width:17.0px;height:174.0px;background:#5e5e5e;"></div><div style="position:absolute;left:153.5px;top:19.19999999999999px;width:17.799999999999955px;height:174.0px;background:#5e5e5e;"></div></div><div style="position:absolute;left:457.5px;top:280.2px;width:171.29999999999995px;height:193.2px;border:1.6px solid #b88b3c;border-radius:6px;"></div><svg width="10" height="9" viewBox="0 0 10 9" style="position:absolute;left:462.0px;top:285.29999999999995px;overflow:visible"><clipPath id="ic4620"><rect x="0" y="0" width="9.5" height="9" rx="3"/></clipPath><g clip-path="url(#ic4620)"><rect width="9.5" height="9" fill="#a9a9a9"/><rect width="4.75" height="4.5" fill="#f2f2f2"/><rect x="4.75" y="4.5" width="4.75" height="4.5" fill="#f2f2f2"/></g></svg><div style="position:absolute;left:479.0px;top:285.19px;font-size:11px;line-height:11px;height:11px;color:#ececec;font-weight:normal;white-space:nowrap;">Kratzer groß</div><svg width="13" height="13" viewBox="0 0 13 13" style="position:absolute;left:613.5px;top:283.49999999999994px;overflow:visible"><circle cx="6.5" cy="6.5" r="6.2" fill="#d6d6d6"/><text x="6.5" y="10.3" text-anchor="middle" font-family="Liberation Sans" font-weight="bold" font-size="10.5" fill="#3c3c3c">S</text></svg><div style="position:absolute;right:1302.5px;top:310.08px;font-size:10.3px;line-height:10.3px;height:10.3px;color:#e2e2e2;font-weight:normal;white-space:nowrap;text-align:right;">Ergebnis</div><svg width="10" height="10" viewBox="0 0 10 10" style="position:absolute;left:615.0px;top:308.8px;overflow:visible"><circle cx="5" cy="5" r="5" fill="#d4d4d4"/></svg><svg width="10" height="10" viewBox="0 0 10 10" style="position:absolute;left:461.8px;top:326.0px;overflow:visible"><circle cx="5" cy="5" r="4.25" fill="#777" stroke="#cfcfcf" stroke-width="1.5"/></svg><div style="position:absolute;left:489.5px;top:327.28px;font-size:10.3px;line-height:10.3px;height:10.3px;color:#e2e2e2;font-weight:normal;white-space:nowrap;">Startwert</div><svg width="10" height="10" viewBox="0 0 10 10" style="position:absolute;left:461.8px;top:343.3px;overflow:visible"><circle cx="5" cy="5" r="4.25" fill="#777" stroke="#cfcfcf" stroke-width="1.5"/></svg><div style="position:absolute;left:489.5px;top:344.58px;font-size:10.3px;line-height:10.3px;height:10.3px;color:#e2e2e2;font-weight:normal;white-space:nowrap;">Größe</div><svg width="10" height="10" viewBox="0 0 10 10" style="position:absolute;left:461.8px;top:360.6px;overflow:visible"><circle cx="5" cy="5" r="4.25" fill="#777" stroke="#cfcfcf" stroke-width="1.5"/></svg><div style="position:absolute;left:489.5px;top:361.88px;font-size:10.3px;line-height:10.3px;height:10.3px;color:#e2e2e2;font-weight:normal;white-space:nowrap;">Winkel</div><div style="position:absolute;left:461.8px;top:377.9px;width:10px;height:10px;background:#d6d6d6;border-radius:2.5px;"></div><div style="position:absolute;left:489.5px;top:379.18px;font-size:10.3px;line-height:10.3px;height:10.3px;color:#e2e2e2;font-weight:normal;white-space:nowrap;">Dichte</div><svg width="10" height="10" viewBox="0 0 10 10" style="position:absolute;left:461.8px;top:395.2px;overflow:visible"><circle cx="5" cy="5" r="4.25" fill="#777" stroke="#cfcfcf" stroke-width="1.5"/></svg><div style="position:absolute;left:489.5px;top:396.48px;font-size:10.3px;line-height:10.3px;height:10.3px;color:#e2e2e2;font-weight:normal;white-space:nowrap;">Ebenen</div><svg width="10" height="10" viewBox="0 0 10 10" style="position:absolute;left:461.8px;top:412.5px;overflow:visible"><circle cx="5" cy="5" r="4.25" fill="#777" stroke="#cfcfcf" stroke-width="1.5"/></svg><div style="position:absolute;left:489.5px;top:413.78px;font-size:10.3px;line-height:10.3px;height:10.3px;color:#e2e2e2;font-weight:normal;white-space:nowrap;">Biegen</div><svg width="10" height="10" viewBox="0 0 10 10" style="position:absolute;left:461.8px;top:429.8px;overflow:visible"><circle cx="5" cy="5" r="4.25" fill="#777" stroke="#cfcfcf" stroke-width="1.5"/></svg><div style="position:absolute;left:489.5px;top:431.08px;font-size:10.3px;line-height:10.3px;height:10.3px;color:#e2e2e2;font-weight:normal;white-space:nowrap;">Dicke</div><svg width="10" height="10" viewBox="0 0 10 10" style="position:absolute;left:461.8px;top:447.1px;overflow:visible"><circle cx="5" cy="5" r="4.25" fill="#777" stroke="#cfcfcf" stroke-width="1.5"/></svg><div style="position:absolute;left:489.5px;top:448.38px;font-size:10.3px;line-height:10.3px;height:10.3px;color:#e2e2e2;font-weight:normal;white-space:nowrap;">Tiefe</div><div style="position:absolute;left:456px;top:490.3px;width:170.5px;height:191.7px;background:#6a6a6a;border-radius:6px;overflow:hidden;"><div style="position:absolute;left:0px;top:0px;width:170.5px;height:19.19999999999999px;background:#474747;"></div><div style="position:absolute;left:0px;top:19.19999999999999px;width:17px;height:172.5px;background:#5e5e5e;"></div><div style="position:absolute;left:153.5px;top:19.19999999999999px;width:17.0px;height:172.5px;background:#5e5e5e;"></div></div><div style="position:absolute;left:456px;top:490.3px;width:170.5px;height:191.7px;border:1.6px solid #b88b3c;border-radius:6px;"></div><svg width="10" height="9" viewBox="0 0 10 9" style="position:absolute;left:460.5px;top:495.4px;overflow:visible"><clipPath id="ic4605"><rect x="0" y="0" width="9.5" height="9" rx="3"/></clipPath><g clip-path="url(#ic4605)"><rect width="9.5" height="9" fill="#a9a9a9"/><rect width="4.75" height="4.5" fill="#f2f2f2"/><rect x="4.75" y="4.5" width="4.75" height="4.5" fill="#f2f2f2"/></g></svg><div style="position:absolute;left:477.5px;top:495.29px;font-size:11px;line-height:11px;height:11px;color:#ececec;font-weight:normal;white-space:nowrap;">Kratzer klein</div><svg width="13" height="13" viewBox="0 0 13 13" style="position:absolute;left:611.2px;top:493.59999999999997px;overflow:visible"><circle cx="6.5" cy="6.5" r="6.2" fill="#d6d6d6"/><text x="6.5" y="10.3" text-anchor="middle" font-family="Liberation Sans" font-weight="bold" font-size="10.5" fill="#3c3c3c">S</text></svg><div style="position:absolute;right:1304.8px;top:519.98px;font-size:10.3px;line-height:10.3px;height:10.3px;color:#e2e2e2;font-weight:normal;white-space:nowrap;text-align:right;">Ergebnis</div><svg width="10" height="10" viewBox="0 0 10 10" style="position:absolute;left:612.7px;top:518.7px;overflow:visible"><circle cx="5" cy="5" r="5" fill="#d4d4d4"/></svg><svg width="10" height="10" viewBox="0 0 10 10" style="position:absolute;left:460.3px;top:535.7px;overflow:visible"><circle cx="5" cy="5" r="4.25" fill="#777" stroke="#cfcfcf" stroke-width="1.5"/></svg><div style="position:absolute;left:488px;top:536.98px;font-size:10.3px;line-height:10.3px;height:10.3px;color:#e2e2e2;font-weight:normal;white-space:nowrap;">Startwert</div><svg width="10" height="10" viewBox="0 0 10 10" style="position:absolute;left:460.3px;top:553.0px;overflow:visible"><circle cx="5" cy="5" r="4.25" fill="#777" stroke="#cfcfcf" stroke-width="1.5"/></svg><div style="position:absolute;left:488px;top:554.28px;font-size:10.3px;line-height:10.3px;height:10.3px;color:#e2e2e2;font-weight:normal;white-space:nowrap;">Größe</div><svg width="10" height="10" viewBox="0 0 10 10" style="position:absolute;left:460.3px;top:570.3000000000001px;overflow:visible"><circle cx="5" cy="5" r="4.25" fill="#777" stroke="#cfcfcf" stroke-width="1.5"/></svg><div style="position:absolute;left:488px;top:571.58px;font-size:10.3px;line-height:10.3px;height:10.3px;color:#e2e2e2;font-weight:normal;white-space:nowrap;">Winkel</div><div style="position:absolute;left:460.3px;top:587.6px;width:10px;height:10px;background:#d6d6d6;border-radius:2.5px;"></div><div style="position:absolute;left:488px;top:588.88px;font-size:10.3px;line-height:10.3px;height:10.3px;color:#e2e2e2;font-weight:normal;white-space:nowrap;">Dichte</div><svg width="10" height="10" viewBox="0 0 10 10" style="position:absolute;left:460.3px;top:604.9000000000001px;overflow:visible"><circle cx="5" cy="5" r="4.25" fill="#777" stroke="#cfcfcf" stroke-width="1.5"/></svg><div style="position:absolute;left:488px;top:606.18px;font-size:10.3px;line-height:10.3px;height:10.3px;color:#e2e2e2;font-weight:normal;white-space:nowrap;">Ebenen</div><svg width="10" height="10" viewBox="0 0 10 10" style="position:absolute;left:460.3px;top:622.2px;overflow:visible"><circle cx="5" cy="5" r="4.25" fill="#777" stroke="#cfcfcf" stroke-width="1.5"/></svg><div style="position:absolute;left:488px;top:623.48px;font-size:10.3px;line-height:10.3px;height:10.3px;color:#e2e2e2;font-weight:normal;white-space:nowrap;">Biegen</div><svg width="10" height="10" viewBox="0 0 10 10" style="position:absolute;left:460.3px;top:639.5px;overflow:visible"><circle cx="5" cy="5" r="4.25" fill="#777" stroke="#cfcfcf" stroke-width="1.5"/></svg><div style="position:absolute;left:488px;top:640.78px;font-size:10.3px;line-height:10.3px;height:10.3px;color:#e2e2e2;font-weight:normal;white-space:nowrap;">Dicke</div><svg width="10" height="10" viewBox="0 0 10 10" style="position:absolute;left:460.3px;top:656.8000000000001px;overflow:visible"><circle cx="5" cy="5" r="4.25" fill="#777" stroke="#cfcfcf" stroke-width="1.5"/></svg><div style="position:absolute;left:488px;top:658.08px;font-size:10.3px;line-height:10.3px;height:10.3px;color:#e2e2e2;font-weight:normal;white-space:nowrap;">Tiefe</div><div style="position:absolute;left:661px;top:277.5px;width:148.70000000000005px;height:71.19999999999999px;background:#6a6a6a;border-radius:6px;overflow:hidden;"><div style="position:absolute;left:0px;top:0px;width:148.70000000000005px;height:18.19999999999999px;background:#474747;"></div><div style="position:absolute;left:0px;top:18.19999999999999px;width:17.5px;height:53.0px;background:#5e5e5e;"></div><div style="position:absolute;left:130.79999999999995px;top:18.19999999999999px;width:17.90000000000009px;height:53.0px;background:#5e5e5e;"></div></div><div style="position:absolute;left:661px;top:277.5px;width:148.70000000000005px;height:71.19999999999999px;border:1.6px solid #b88b3c;border-radius:6px;"></div><svg width="10" height="9" viewBox="0 0 10 9" style="position:absolute;left:665.5px;top:282.1px;overflow:visible"><clipPath id="ic6655"><rect x="0" y="0" width="9.5" height="9" rx="3"/></clipPath><g clip-path="url(#ic6655)"><rect width="9.5" height="9" fill="#a9a9a9"/><rect width="4.75" height="4.5" fill="#f2f2f2"/><rect x="4.75" y="4.5" width="4.75" height="4.5" fill="#f2f2f2"/></g></svg><div style="position:absolute;left:682.5px;top:281.99px;font-size:11px;line-height:11px;height:11px;color:#ececec;font-weight:normal;white-space:nowrap;">Farbe invertieren.1</div><svg width="13" height="13" viewBox="0 0 13 13" style="position:absolute;left:794.4000000000001px;top:280.3px;overflow:visible"><circle cx="6.5" cy="6.5" r="6.2" fill="#d6d6d6"/><text x="6.5" y="10.3" text-anchor="middle" font-family="Liberation Sans" font-weight="bold" font-size="10.5" fill="#3c3c3c">S</text></svg><div style="position:absolute;right:1123px;top:306.78px;font-size:10.3px;line-height:10.3px;height:10.3px;color:#e2e2e2;font-weight:normal;white-space:nowrap;text-align:right;">Farbe</div><svg width="10" height="10" viewBox="0 0 10 10" style="position:absolute;left:795.4px;top:305.5px;overflow:visible"><circle cx="5" cy="5" r="5" fill="#e2cb3c"/></svg><svg width="10" height="10" viewBox="0 0 10 10" style="position:absolute;left:665.5px;top:322.4px;overflow:visible"><circle cx="5" cy="5" r="4.2" fill="#55552e" stroke="#d2cb56" stroke-width="1.6"/><circle cx="5" cy="5" r="2.1" fill="#f2ee74"/></svg><div style="position:absolute;left:693px;top:323.68px;font-size:10.3px;line-height:10.3px;height:10.3px;color:#e2e2e2;font-weight:normal;white-space:nowrap;">Farbe</div><div style="position:absolute;left:840px;top:258.6px;width:201.20000000000005px;height:140.5px;background:#6a6a6a;border-radius:6px;overflow:hidden;"><div style="position:absolute;left:0px;top:0px;width:201.20000000000005px;height:19.0px;background:#474747;"></div><div style="position:absolute;left:0px;top:19.0px;width:16.700000000000045px;height:121.5px;background:#5e5e5e;"></div><div style="position:absolute;left:183.5px;top:19.0px;width:17.700000000000045px;height:121.5px;background:#5e5e5e;"></div></div><div style="position:absolute;left:840px;top:258.6px;width:201.20000000000005px;height:140.5px;border:1.6px solid #b88b3c;border-radius:6px;"></div><svg width="10" height="9" viewBox="0 0 10 9" style="position:absolute;left:844.5px;top:263.6px;overflow:visible"><clipPath id="ic8445"><rect x="0" y="0" width="9.5" height="9" rx="3"/></clipPath><g clip-path="url(#ic8445)"><rect width="9.5" height="9" fill="#a9a9a9"/><rect width="4.75" height="4.5" fill="#f2f2f2"/><rect x="4.75" y="4.5" width="4.75" height="4.5" fill="#f2f2f2"/></g></svg><div style="position:absolute;left:861.5px;top:263.49px;font-size:11px;line-height:11px;height:11px;color:#ececec;font-weight:normal;white-space:nowrap;">Farbe mit Alpha erzeugen.2</div><svg width="13" height="13" viewBox="0 0 13 13" style="position:absolute;left:1025.9px;top:261.8px;overflow:visible"><circle cx="6.5" cy="6.5" r="6.2" fill="#d6d6d6"/><text x="6.5" y="10.3" text-anchor="middle" font-family="Liberation Sans" font-weight="bold" font-size="10.5" fill="#3c3c3c">S</text></svg><div style="position:absolute;right:890.3px;top:288.68px;font-size:10.3px;line-height:10.3px;height:10.3px;color:#e2e2e2;font-weight:normal;white-space:nowrap;text-align:right;">Ergebnis</div><svg width="10" height="10" viewBox="0 0 10 10" style="position:absolute;left:1027.2px;top:287.4px;overflow:visible"><circle cx="5" cy="5" r="5" fill="#e2cb3c"/></svg><svg width="10" height="10" viewBox="0 0 10 10" style="position:absolute;left:843.7px;top:304.2px;overflow:visible"><circle cx="5" cy="5" r="4.25" fill="#77754a" stroke="#cfc452" stroke-width="1.5"/></svg><div style="position:absolute;left:871px;top:305.48px;font-size:10.3px;line-height:10.3px;height:10.3px;color:#e2e2e2;font-weight:normal;white-space:nowrap;">RGB</div><svg width="10" height="10" viewBox="0 0 10 10" style="position:absolute;left:843.7px;top:321.5px;overflow:visible"><circle cx="5" cy="5" r="4.25" fill="#777" stroke="#cfcfcf" stroke-width="1.5"/></svg><div style="position:absolute;left:871px;top:322.78px;font-size:10.3px;line-height:10.3px;height:10.3px;color:#e2e2e2;font-weight:normal;white-space:nowrap;">Rot</div><svg width="10" height="10" viewBox="0 0 10 10" style="position:absolute;left:843.7px;top:338.8px;overflow:visible"><circle cx="5" cy="5" r="4.25" fill="#777" stroke="#cfcfcf" stroke-width="1.5"/></svg><div style="position:absolute;left:871px;top:340.08px;font-size:10.3px;line-height:10.3px;height:10.3px;color:#e2e2e2;font-weight:normal;white-space:nowrap;">Grün</div><svg width="10" height="10" viewBox="0 0 10 10" style="position:absolute;left:843.7px;top:356.1px;overflow:visible"><circle cx="5" cy="5" r="4.25" fill="#777" stroke="#cfcfcf" stroke-width="1.5"/></svg><div style="position:absolute;left:871px;top:357.38px;font-size:10.3px;line-height:10.3px;height:10.3px;color:#e2e2e2;font-weight:normal;white-space:nowrap;">Blau</div><svg width="10" height="10" viewBox="0 0 10 10" style="position:absolute;left:843.7px;top:373.4px;overflow:visible"><circle cx="5" cy="5" r="4.25" fill="#555" stroke="#e8e8e8" stroke-width="1.5"/><circle cx="5" cy="5" r="2" fill="#f4f4f4"/></svg><div style="position:absolute;left:871px;top:374.68px;font-size:10.3px;line-height:10.3px;height:10.3px;color:#e2e2e2;font-weight:normal;white-space:nowrap;">Alpha</div><div style="position:absolute;left:653px;top:491px;width:200.20000000000005px;height:140.79999999999995px;background:#6a6a6a;border-radius:6px;overflow:hidden;"><div style="position:absolute;left:0px;top:0px;width:200.20000000000005px;height:19.399999999999977px;background:#474747;"></div><div style="position:absolute;left:0px;top:19.399999999999977px;width:17px;height:121.39999999999998px;background:#5e5e5e;"></div><div style="position:absolute;left:183px;top:19.399999999999977px;width:17.200000000000045px;height:121.39999999999998px;background:#5e5e5e;"></div></div><div style="position:absolute;left:653px;top:491px;width:200.20000000000005px;height:140.79999999999995px;border:1.6px solid #b88b3c;border-radius:6px;"></div><svg width="10" height="9" viewBox="0 0 10 9" style="position:absolute;left:657.5px;top:496.2px;overflow:visible"><clipPath id="ic6575"><rect x="0" y="0" width="9.5" height="9" rx="3"/></clipPath><g clip-path="url(#ic6575)"><rect width="9.5" height="9" fill="#a9a9a9"/><rect width="4.75" height="4.5" fill="#f2f2f2"/><rect x="4.75" y="4.5" width="4.75" height="4.5" fill="#f2f2f2"/></g></svg><div style="position:absolute;left:674.5px;top:496.09px;font-size:11px;line-height:11px;height:11px;color:#ececec;font-weight:normal;white-space:nowrap;">Farbe mit Alpha erzeugen.1</div><svg width="13" height="13" viewBox="0 0 13 13" style="position:absolute;left:837.9000000000001px;top:494.4px;overflow:visible"><circle cx="6.5" cy="6.5" r="6.2" fill="#d6d6d6"/><text x="6.5" y="10.3" text-anchor="middle" font-family="Liberation Sans" font-weight="bold" font-size="10.5" fill="#3c3c3c">S</text></svg><div style="position:absolute;right:1078.3px;top:520.88px;font-size:10.3px;line-height:10.3px;height:10.3px;color:#e2e2e2;font-weight:normal;white-space:nowrap;text-align:right;">Ergebnis</div><svg width="10" height="10" viewBox="0 0 10 10" style="position:absolute;left:839.2px;top:519.6px;overflow:visible"><circle cx="5" cy="5" r="5" fill="#e2cb3c"/></svg><svg width="10" height="10" viewBox="0 0 10 10" style="position:absolute;left:656.7px;top:537.0px;overflow:visible"><circle cx="5" cy="5" r="4.2" fill="#55552e" stroke="#d2cb56" stroke-width="1.6"/><circle cx="5" cy="5" r="2.1" fill="#f2ee74"/></svg><div style="position:absolute;left:684px;top:538.28px;font-size:10.3px;line-height:10.3px;height:10.3px;color:#e2e2e2;font-weight:normal;white-space:nowrap;">RGB</div><svg width="10" height="10" viewBox="0 0 10 10" style="position:absolute;left:656.7px;top:554.3px;overflow:visible"><circle cx="5" cy="5" r="4.25" fill="#777" stroke="#cfcfcf" stroke-width="1.5"/></svg><div style="position:absolute;left:684px;top:555.58px;font-size:10.3px;line-height:10.3px;height:10.3px;color:#e2e2e2;font-weight:normal;white-space:nowrap;">Rot</div><svg width="10" height="10" viewBox="0 0 10 10" style="position:absolute;left:656.7px;top:571.6px;overflow:visible"><circle cx="5" cy="5" r="4.25" fill="#777" stroke="#cfcfcf" stroke-width="1.5"/></svg><div style="position:absolute;left:684px;top:572.88px;font-size:10.3px;line-height:10.3px;height:10.3px;color:#e2e2e2;font-weight:normal;white-space:nowrap;">Grün</div><svg width="10" height="10" viewBox="0 0 10 10" style="position:absolute;left:656.7px;top:588.9px;overflow:visible"><circle cx="5" cy="5" r="4.25" fill="#777" stroke="#cfcfcf" stroke-width="1.5"/></svg><div style="position:absolute;left:684px;top:590.18px;font-size:10.3px;line-height:10.3px;height:10.3px;color:#e2e2e2;font-weight:normal;white-space:nowrap;">Blau</div><svg width="10" height="10" viewBox="0 0 10 10" style="position:absolute;left:656.7px;top:606.2px;overflow:visible"><circle cx="5" cy="5" r="4.25" fill="#777" stroke="#cfcfcf" stroke-width="1.5"/></svg><div style="position:absolute;left:684px;top:607.48px;font-size:10.3px;line-height:10.3px;height:10.3px;color:#e2e2e2;font-weight:normal;white-space:nowrap;">Alpha</div><div style="position:absolute;left:1058.3px;top:466.7px;width:147.29999999999995px;height:245.50000000000006px;background:#6a6a6a;border-radius:6px;overflow:hidden;"><div style="position:absolute;left:0px;top:0px;width:147.29999999999995px;height:89.00000000000006px;background:#474747;"></div><div style="position:absolute;left:0px;top:70.30000000000001px;width:147.29999999999995px;height:1px;background:#4e4e4e;"></div><div style="position:absolute;left:0px;top:89.00000000000006px;width:15.400000000000091px;height:156.5px;background:#5e5e5e;"></div><div style="position:absolute;left:129.70000000000005px;top:89.00000000000006px;width:17.59999999999991px;height:156.5px;background:#5e5e5e;"></div></div><div style="position:absolute;left:1058.3px;top:466.7px;width:147.29999999999995px;height:245.50000000000006px;border:1.6px solid #b88b3c;border-radius:6px;"></div><svg width="10" height="9" viewBox="0 0 10 9" style="position:absolute;left:1062.8px;top:541.85px;overflow:visible"><clipPath id="ic10628"><rect x="0" y="0" width="9.5" height="9" rx="3"/></clipPath><g clip-path="url(#ic10628)"><rect width="9.5" height="9" fill="#a9a9a9"/><rect width="4.75" height="4.5" fill="#f2f2f2"/><rect x="4.75" y="4.5" width="4.75" height="4.5" fill="#f2f2f2"/></g></svg><div style="position:absolute;left:1079.8px;top:541.74px;font-size:11px;line-height:11px;height:11px;color:#ececec;font-weight:normal;white-space:nowrap;">Ebene.1</div><svg width="13" height="13" viewBox="0 0 13 13" style="position:absolute;left:1190.3px;top:540.0500000000001px;overflow:visible"><circle cx="6.5" cy="6.5" r="6.2" fill="#d6d6d6"/><text x="6.5" y="10.3" text-anchor="middle" font-family="Liberation Sans" font-weight="bold" font-size="10.5" fill="#3c3c3c">S</text></svg><svg width="61" height="60" viewBox="0 0 61 60" style="position:absolute;left:1101.2px;top:471.6px;overflow:visible"><rect x="0" y="0" width="61" height="60" fill="#fdfdfd"/><rect x="20.1" y="9.7" width="0.8" height="1.7" fill="#9a9a9a"/><rect x="49.5" y="6.5" width="0.8" height="1.6" fill="#b0b0b0"/><rect x="3.2" y="26.2" width="0.8" height="0.9" fill="#9a9a9a"/><rect x="33.5" y="4.4" width="0.8" height="1.6" fill="#b0b0b0"/><rect x="38.2" y="34.8" width="0.8" height="0.9" fill="#888888"/><rect x="3.9" y="13.8" width="0.8" height="1.6" fill="#b0b0b0"/><rect x="18.1" y="9.4" width="0.8" height="1.0" fill="#c4c4c4"/><rect x="34.1" y="40.6" width="0.8" height="0.9" fill="#b0b0b0"/><rect x="23.0" y="32.8" width="0.8" height="0.9" fill="#9a9a9a"/><rect x="37.5" y="29.8" width="0.8" height="1.5" fill="#c4c4c4"/><rect x="28.5" y="54.6" width="0.8" height="1.3" fill="#b0b0b0"/><rect x="47.9" y="41.5" width="0.8" height="1.1" fill="#c4c4c4"/><rect x="32.0" y="51.8" width="0.8" height="1.8" fill="#c4c4c4"/><rect x="36.9" y="5.2" width="0.8" height="1.5" fill="#b0b0b0"/><rect x="45.7" y="9.8" width="0.8" height="1.5" fill="#9a9a9a"/><rect x="57.8" y="5.5" width="0.8" height="1.6" fill="#c4c4c4"/><rect x="21.1" y="21.3" width="0.8" height="1.5" fill="#888888"/><rect x="5.1" y="6.4" width="0.8" height="1.2" fill="#9a9a9a"/><rect x="4.6" y="41.7" width="0.8" height="1.7" fill="#888888"/><rect x="17.8" y="23.4" width="0.8" height="1.7" fill="#9a9a9a"/><rect x="56.5" y="21.6" width="0.8" height="1.7" fill="#888888"/><rect x="4.5" y="45.6" width="0.8" height="1.0" fill="#b0b0b0"/><rect x="24.5" y="54.2" width="0.8" height="1.5" fill="#b0b0b0"/><rect x="27.5" y="32.9" width="0.8" height="2.0" fill="#888888"/><rect x="52.0" y="17.1" width="0.8" height="1.4" fill="#c4c4c4"/><rect x="41.3" y="23.1" width="0.8" height="1.1" fill="#9a9a9a"/><rect x="11.4" y="14.5" width="0.8" height="1.1" fill="#888888"/><rect x="50.0" y="11.6" width="0.8" height="1.2" fill="#b0b0b0"/><rect x="25.7" y="22.4" width="0.8" height="1.6" fill="#b0b0b0"/><rect x="41.7" y="30.9" width="0.8" height="1.7" fill="#9a9a9a"/><rect x="27.9" y="51.5" width="0.8" height="2.1" fill="#888888"/><rect x="24.5" y="23.9" width="0.8" height="1.5" fill="#888888"/><rect x="4.7" y="4.9" width="0.8" height="1.1" fill="#b0b0b0"/><rect x="7.5" y="35.8" width="0.8" height="0.9" fill="#b0b0b0"/><rect x="32.7" y="56.0" width="0.8" height="1.7" fill="#9a9a9a"/><rect x="52.6" y="36.6" width="0.8" height="1.0" fill="#c4c4c4"/><rect x="57.4" y="35.9" width="0.8" height="1.5" fill="#9a9a9a"/><rect x="51.1" y="58.6" width="0.8" height="1.5" fill="#888888"/><rect x="19.4" y="9.4" width="0.8" height="1.8" fill="#c4c4c4"/><rect x="29.2" y="41.1" width="0.8" height="1.5" fill="#b0b0b0"/><rect x="57.1" y="31.6" width="0.8" height="1.0" fill="#9a9a9a"/><rect x="45.7" y="18.3" width="0.8" height="1.7" fill="#9a9a9a"/><rect x="42.1" y="16.1" width="0.8" height="1.3" fill="#b0b0b0"/><rect x="22.0" y="13.9" width="0.8" height="1.6" fill="#c4c4c4"/><rect x="38.6" y="36.6" width="0.8" height="1.9" fill="#b0b0b0"/><rect x="48.6" y="48.5" width="0.8" height="1.8" fill="#b0b0b0"/><rect x="12.8" y="29.6" width="0.8" height="1.8" fill="#9a9a9a"/><rect x="47.6" y="28.4" width="0.8" height="1.1" fill="#c4c4c4"/><rect x="27.4" y="55.3" width="0.8" height="2.2" fill="#c4c4c4"/><rect x="5.8" y="6.9" width="0.8" height="1.5" fill="#c4c4c4"/><rect x="13.1" y="37.2" width="0.8" height="2.1" fill="#9a9a9a"/><rect x="29.3" y="38.9" width="0.8" height="1.9" fill="#9a9a9a"/><rect x="50.2" y="8.0" width="0.8" height="1.3" fill="#b0b0b0"/><rect x="29.2" y="11.4" width="0.8" height="1.9" fill="#c4c4c4"/><rect x="6.1" y="55.9" width="0.8" height="1.8" fill="#888888"/><rect x="24.7" y="55.9" width="0.8" height="1.8" fill="#b0b0b0"/><rect x="59.6" y="2.6" width="0.8" height="1.6" fill="#888888"/><rect x="48.6" y="9.5" width="0.8" height="2.0" fill="#888888"/><rect x="39.8" y="21.3" width="0.8" height="1.6" fill="#b0b0b0"/><rect x="2.3" y="47.4" width="0.8" height="1.8" fill="#9a9a9a"/><rect x="32.1" y="55.2" width="0.8" height="1.4" fill="#b0b0b0"/><rect x="49.7" y="13.2" width="0.8" height="1.2" fill="#c4c4c4"/><rect x="30.6" y="45.3" width="0.8" height="1.3" fill="#888888"/><rect x="50.2" y="4.5" width="0.8" height="1.8" fill="#888888"/><rect x="40.1" y="48.3" width="0.8" height="1.5" fill="#b0b0b0"/><rect x="32.4" y="31.4" width="0.8" height="0.8" fill="#888888"/><rect x="46.8" y="36.3" width="0.8" height="1.9" fill="#b0b0b0"/><rect x="11.2" y="28.5" width="0.8" height="1.8" fill="#9a9a9a"/><rect x="20.2" y="31.1" width="0.8" height="1.6" fill="#9a9a9a"/><rect x="53.1" y="4.3" width="0.8" height="1.1" fill="#9a9a9a"/><rect x="46.6" y="30.4" width="0.8" height="1.6" fill="#9a9a9a"/><rect x="27.2" y="36.5" width="0.8" height="1.5" fill="#b0b0b0"/><rect x="41.9" y="27.2" width="0.8" height="1.5" fill="#888888"/><rect x="31.0" y="15.4" width="0.8" height="1.5" fill="#c4c4c4"/><rect x="55.4" y="52.8" width="0.8" height="1.1" fill="#888888"/><rect x="9.1" y="8.1" width="0.8" height="1.4" fill="#9a9a9a"/><rect x="40.6" y="25.8" width="0.8" height="1.1" fill="#c4c4c4"/><rect x="47.3" y="53.0" width="0.8" height="1.0" fill="#c4c4c4"/><rect x="9.4" y="52.2" width="0.8" height="2.2" fill="#b0b0b0"/><rect x="45.1" y="6.5" width="0.8" height="2.0" fill="#b0b0b0"/><rect x="59.4" y="49.3" width="0.8" height="1.0" fill="#888888"/><rect x="59.7" y="24.4" width="0.8" height="1.4" fill="#c4c4c4"/><rect x="19.8" y="42.9" width="0.8" height="0.8" fill="#888888"/><rect x="27.0" y="2.0" width="0.8" height="1.3" fill="#c4c4c4"/><rect x="31.2" y="4.7" width="0.8" height="2.2" fill="#b0b0b0"/><rect x="58.3" y="7.1" width="0.8" height="1.2" fill="#9a9a9a"/><rect x="54.4" y="11.5" width="0.8" height="1.9" fill="#888888"/><rect x="51.1" y="40.2" width="0.8" height="2.1" fill="#888888"/><rect x="9.8" y="54.3" width="0.8" height="1.6" fill="#c4c4c4"/><rect x="6.3" y="4.3" width="0.8" height="1.8" fill="#888888"/><rect x="53.8" y="16.6" width="0.8" height="0.8" fill="#9a9a9a"/><rect x="48.3" y="5.9" width="0.8" height="2.0" fill="#9a9a9a"/><rect x="16.6" y="8.1" width="0.8" height="0.8" fill="#888888"/><rect x="55.7" y="16.5" width="0.8" height="1.0" fill="#b0b0b0"/><rect x="56.3" y="57.2" width="0.8" height="1.2" fill="#b0b0b0"/><rect x="12.9" y="19.1" width="0.8" height="1.2" fill="#b0b0b0"/><rect x="18.1" y="30.0" width="0.8" height="1.0" fill="#c4c4c4"/><rect x="48.4" y="58.7" width="0.8" height="0.9" fill="#9a9a9a"/><rect x="44.3" y="33.0" width="0.8" height="1.1" fill="#888888"/><rect x="15.5" y="26.9" width="0.8" height="1.7" fill="#888888"/><rect x="39.7" y="32.7" width="0.8" height="2.0" fill="#c4c4c4"/><rect x="41.6" y="58.0" width="0.8" height="1.3" fill="#b0b0b0"/><rect x="24.9" y="21.2" width="0.8" height="0.9" fill="#b0b0b0"/><rect x="1.8" y="37.3" width="0.8" height="2.0" fill="#888888"/><rect x="10.6" y="5.9" width="0.8" height="2.0" fill="#c4c4c4"/><rect x="36.3" y="41.2" width="0.8" height="0.9" fill="#b0b0b0"/><rect x="10.3" y="26.9" width="0.8" height="1.2" fill="#c4c4c4"/><rect x="58.4" y="32.7" width="0.8" height="1.1" fill="#c4c4c4"/><rect x="13.9" y="11.6" width="0.8" height="1.3" fill="#9a9a9a"/><rect x="29.0" y="30.2" width="0.8" height="1.1" fill="#9a9a9a"/><rect x="6.4" y="48.4" width="0.8" height="1.0" fill="#9a9a9a"/><rect x="24.2" y="18.4" width="0.8" height="1.7" fill="#9a9a9a"/><rect x="35.5" y="31.7" width="0.8" height="1.9" fill="#888888"/><rect x="46.1" y="42.8" width="0.8" height="1.5" fill="#c4c4c4"/><rect x="43.7" y="38.3" width="0.8" height="0.9" fill="#888888"/><rect x="44.3" y="48.1" width="0.8" height="1.0" fill="#9a9a9a"/><rect x="49.8" y="34.9" width="0.8" height="2.0" fill="#b0b0b0"/><rect x="6.0" y="3.4" width="0.8" height="1.7" fill="#9a9a9a"/><rect x="23.2" y="27.2" width="0.8" height="0.9" fill="#9a9a9a"/><rect x="37.9" y="40.5" width="0.8" height="1.5" fill="#9a9a9a"/><rect x="28.0" y="5.1" width="0.8" height="2.1" fill="#9a9a9a"/><rect x="39.9" y="4.8" width="0.8" height="1.8" fill="#c4c4c4"/><rect x="48.7" y="50.1" width="0.8" height="1.1" fill="#b0b0b0"/><rect x="14.6" y="38.7" width="0.8" height="1.4" fill="#888888"/><rect x="5.5" y="53.8" width="0.8" height="1.2" fill="#9a9a9a"/><rect x="37.4" y="38.3" width="0.8" height="0.9" fill="#b0b0b0"/><rect x="20.6" y="38.8" width="0.8" height="1.8" fill="#b0b0b0"/><rect x="1.7" y="4.5" width="0.8" height="1.2" fill="#9a9a9a"/><rect x="41.8" y="40.2" width="0.8" height="1.2" fill="#c4c4c4"/><rect x="28.4" y="28.0" width="0.8" height="1.0" fill="#b0b0b0"/><rect x="19.4" y="6.0" width="0.8" height="1.5" fill="#c4c4c4"/><rect x="28.1" y="48.6" width="0.8" height="2.2" fill="#888888"/><rect x="59.6" y="23.4" width="0.8" height="2.1" fill="#b0b0b0"/><rect x="5.4" y="6.2" width="0.8" height="1.8" fill="#c4c4c4"/><rect x="57.2" y="8.7" width="0.8" height="1.9" fill="#c4c4c4"/><rect x="53.3" y="41.8" width="0.8" height="1.1" fill="#888888"/><rect x="24.3" y="10.2" width="0.8" height="2.1" fill="#888888"/><rect x="24.9" y="43.2" width="0.8" height="1.4" fill="#888888"/><rect x="19.6" y="49.7" width="0.8" height="0.8" fill="#c4c4c4"/><rect x="50.5" y="8.0" width="0.8" height="2.1" fill="#9a9a9a"/><rect x="54.2" y="17.8" width="0.8" height="1.3" fill="#888888"/><rect x="24.0" y="51.5" width="0.8" height="0.9" fill="#888888"/><rect x="45.6" y="50.5" width="0.8" height="1.2" fill="#9a9a9a"/><rect x="50.2" y="17.6" width="0.8" height="2.1" fill="#b0b0b0"/><rect x="58.3" y="26.3" width="0.8" height="1.2" fill="#c4c4c4"/><rect x="47.3" y="25.8" width="0.8" height="0.8" fill="#888888"/><rect x="54.9" y="55.6" width="0.8" height="1.6" fill="#9a9a9a"/><rect x="3.9" y="43.5" width="0.8" height="1.4" fill="#b0b0b0"/><rect x="39.0" y="17.6" width="0.8" height="0.9" fill="#b0b0b0"/><rect x="11.1" y="25.1" width="0.8" height="1.2" fill="#c4c4c4"/><rect x="44.6" y="57.6" width="0.8" height="1.2" fill="#b0b0b0"/><rect x="18.7" y="33.3" width="0.8" height="1.4" fill="#b0b0b0"/><rect x="38.9" y="5.4" width="0.8" height="1.5" fill="#888888"/><rect x="33.5" y="27.3" width="0.8" height="1.3" fill="#888888"/><rect x="26.2" y="32.8" width="0.8" height="1.1" fill="#b0b0b0"/><rect x="21.2" y="6.3" width="0.8" height="1.1" fill="#c4c4c4"/><rect x="48.8" y="12.7" width="0.8" height="0.8" fill="#888888"/><rect x="23.6" y="44.3" width="0.8" height="1.1" fill="#c4c4c4"/><rect x="21.0" y="4.6" width="0.8" height="1.2" fill="#c4c4c4"/><rect x="8.4" y="30.2" width="0.8" height="1.7" fill="#b0b0b0"/></svg><div style="position:absolute;right:725.5px;top:566.78px;font-size:10.3px;line-height:10.3px;height:10.3px;color:#e2e2e2;font-weight:normal;white-space:nowrap;text-align:right;">Ergebnis</div><svg width="10" height="10" viewBox="0 0 10 10" style="position:absolute;left:1191.5px;top:565.5px;overflow:visible"><circle cx="5" cy="5" r="5" fill="#e2cb3c"/></svg><svg width="10" height="10" viewBox="0 0 10 10" style="position:absolute;left:1061.7px;top:582.6px;overflow:visible"><circle cx="5" cy="5" r="4.25" fill="#5e5e5e" stroke="#7a7a7a" stroke-width="1.3"/></svg><svg width="10" height="10" viewBox="0 0 10 10" style="position:absolute;left:1061.7px;top:599.8px;overflow:visible"><circle cx="5" cy="5" r="4.25" fill="#5e5e5e" stroke="#7a7a7a" stroke-width="1.3"/></svg><svg width="10" height="10" viewBox="0 0 10 10" style="position:absolute;left:1061.7px;top:617.4px;overflow:visible"><circle cx="5" cy="5" r="5" fill="#e2cb3c"/></svg><div style="position:absolute;left:1061.7px;top:634.6px;width:10px;height:10px;background:#d6d6d6;border-radius:2.5px;"></div><svg width="10" height="10" viewBox="0 0 10 10" style="position:absolute;left:1061.7px;top:652px;overflow:visible"><circle cx="5" cy="5" r="4.25" fill="#5e5e5e" stroke="#7a7a7a" stroke-width="1.3"/></svg><svg width="10" height="10" viewBox="0 0 10 10" style="position:absolute;left:1061.7px;top:669.3px;overflow:visible"><circle cx="5" cy="5" r="5" fill="#e2cb3c"/></svg><div style="position:absolute;left:1061.7px;top:686.6px;width:10px;height:10px;background:#d6d6d6;border-radius:2.5px;"></div><svg width="30" height="7" viewBox="0 0 30 7" style="position:absolute;left:1078.5px;top:582.5px;overflow:visible"><path d="M1 1 H7 L4 5.5 Z" fill="#d0d0d0"/></svg><div style="position:absolute;left:1089.5px;top:583.88px;font-size:10.3px;line-height:10.3px;height:10.3px;color:#e2e2e2;font-weight:normal;white-space:nowrap;">Ebenen</div><div style="position:absolute;left:1081px;top:590px;width:1px;height:68px;background:#8c8c8c;"></div><div style="position:absolute;left:1081px;top:657px;width:6px;height:1px;background:#8c8c8c;"></div><div style="position:absolute;left:1081px;top:604.5px;width:6px;height:1px;background:#8c8c8c;"></div><svg width="30" height="7" viewBox="0 0 30 7" style="position:absolute;left:1086px;top:599.5px;overflow:visible"><path d="M1 1 H7 L4 5.5 Z" fill="#d0d0d0"/></svg><div style="position:absolute;left:1097.5px;top:601.08px;font-size:10.3px;line-height:10.3px;height:10.3px;color:#e2e2e2;font-weight:normal;white-space:nowrap;">Farbe mit Alpha er</div><svg width="30" height="7" viewBox="0 0 30 7" style="position:absolute;left:1086px;top:652px;overflow:visible"><path d="M1 1 H7 L4 5.5 Z" fill="#d0d0d0"/></svg><div style="position:absolute;left:1097.5px;top:653.38px;font-size:10.3px;line-height:10.3px;height:10.3px;color:#e2e2e2;font-weight:normal;white-space:nowrap;">Farbe mit Alpha er</div><div style="position:absolute;left:1090px;top:608.5px;width:1px;height:32.0px;background:#8c8c8c;"></div><div style="position:absolute;left:1090px;top:660.5px;width:1px;height:32.0px;background:#8c8c8c;"></div><div style="position:absolute;left:1090px;top:622.4px;width:7px;height:1px;background:#8c8c8c;"></div><div style="position:absolute;left:1105.5px;top:618.68px;font-size:10.3px;line-height:10.3px;height:10.3px;color:#e2e2e2;font-weight:normal;white-space:nowrap;">Farbe</div><div style="position:absolute;left:1090px;top:639.6px;width:7px;height:1px;background:#8c8c8c;"></div><div style="position:absolute;left:1105.5px;top:635.88px;font-size:10.3px;line-height:10.3px;height:10.3px;color:#e2e2e2;font-weight:normal;white-space:nowrap;">Deckkraft</div><div style="position:absolute;left:1090px;top:674.3px;width:7px;height:1px;background:#8c8c8c;"></div><div style="position:absolute;left:1105.5px;top:670.58px;font-size:10.3px;line-height:10.3px;height:10.3px;color:#e2e2e2;font-weight:normal;white-space:nowrap;">Farbe</div><div style="position:absolute;left:1090px;top:691.6px;width:7px;height:1px;background:#8c8c8c;"></div><div style="position:absolute;left:1105.5px;top:687.88px;font-size:10.3px;line-height:10.3px;height:10.3px;color:#e2e2e2;font-weight:normal;white-space:nowrap;">Deckkraft</div><div style="position:absolute;left:1237.3px;top:553.2px;width:145.5px;height:139.5px;background:#6a6a6a;border-radius:6px;overflow:hidden;"><div style="position:absolute;left:0px;top:0px;width:145.5px;height:18.59999999999991px;background:#474747;"></div><div style="position:absolute;left:0px;top:18.59999999999991px;width:17.100000000000136px;height:120.90000000000009px;background:#5e5e5e;"></div><div style="position:absolute;left:129.20000000000005px;top:18.59999999999991px;width:16.299999999999955px;height:120.90000000000009px;background:#5e5e5e;"></div></div><svg width="10" height="9" viewBox="0 0 10 9" style="position:absolute;left:1240.3px;top:558.0px;overflow:visible"><clipPath id="ic12403"><rect x="0" y="0" width="9.5" height="9" rx="3"/></clipPath><g clip-path="url(#ic12403)"><rect width="9.5" height="9" fill="#a9a9a9"/><rect width="4.75" height="4.5" fill="#f2f2f2"/><rect x="4.75" y="4.5" width="4.75" height="4.5" fill="#f2f2f2"/></g></svg><div style="position:absolute;left:1258.8px;top:557.89px;font-size:11px;line-height:11px;height:11px;color:#ececec;font-weight:normal;white-space:nowrap;">Diffus</div><svg width="13" height="13" viewBox="0 0 13 13" style="position:absolute;left:1367.5px;top:556.2px;overflow:visible"><circle cx="6.5" cy="6.5" r="6.2" fill="#d6d6d6"/><text x="6.5" y="10.3" text-anchor="middle" font-family="Liberation Sans" font-weight="bold" font-size="10.5" fill="#3c3c3c">S</text></svg><div style="position:absolute;right:547.5px;top:582.58px;font-size:10.3px;line-height:10.3px;height:10.3px;color:#e2e2e2;font-weight:normal;white-space:nowrap;text-align:right;">Ergebnis</div><svg width="10" height="10" viewBox="0 0 10 10" style="position:absolute;left:1370px;top:581.3px;overflow:visible"><circle cx="5" cy="5" r="5" fill="#52c27e"/></svg><svg width="10" height="10" viewBox="0 0 10 10" style="position:absolute;left:1240.2px;top:598.2px;overflow:visible"><circle cx="5" cy="5" r="5" fill="#e2cb3c"/></svg><div style="position:absolute;left:1268.5px;top:599.48px;font-size:10.3px;line-height:10.3px;height:10.3px;color:#e2e2e2;font-weight:normal;white-space:nowrap;">Farbe</div><svg width="10" height="10" viewBox="0 0 10 10" style="position:absolute;left:1240.2px;top:615.5px;overflow:visible"><circle cx="5" cy="5" r="4.25" fill="#777" stroke="#cfcfcf" stroke-width="1.5"/></svg><div style="position:absolute;left:1268.5px;top:616.78px;font-size:10.3px;line-height:10.3px;height:10.3px;color:#e2e2e2;font-weight:normal;white-space:nowrap;">Intensität</div><svg width="10" height="10" viewBox="0 0 10 10" style="position:absolute;left:1240.2px;top:633.3px;overflow:visible"><circle cx="5" cy="5" r="4.25" fill="#777" stroke="#cfcfcf" stroke-width="1.5"/></svg><div style="position:absolute;left:1268.5px;top:634.58px;font-size:10.3px;line-height:10.3px;height:10.3px;color:#e2e2e2;font-weight:normal;white-space:nowrap;">Rauigkeit</div><svg width="10" height="10" viewBox="0 0 10 10" style="position:absolute;left:1240.2px;top:650.5px;overflow:visible"><circle cx="5" cy="5" r="4.25" fill="#6e5a80" stroke="#9c6ad8" stroke-width="1.5"/></svg><div style="position:absolute;left:1268.5px;top:651.78px;font-size:10.3px;line-height:10.3px;height:10.3px;color:#e2e2e2;font-weight:normal;white-space:nowrap;">Normale</div><svg width="10" height="10" viewBox="0 0 10 10" style="position:absolute;left:1240.2px;top:667.8px;overflow:visible"><circle cx="5" cy="5" r="4.25" fill="#777" stroke="#cfcfcf" stroke-width="1.5"/></svg><div style="position:absolute;left:1268.5px;top:669.08px;font-size:10.3px;line-height:10.3px;height:10.3px;color:#e2e2e2;font-weight:normal;white-space:nowrap;">Normalenstärke</div><div style="position:absolute;left:1428px;top:553.4px;width:145.5999999999999px;height:197.39999999999998px;background:#6a6a6a;border-radius:6px;overflow:hidden;"><div style="position:absolute;left:0px;top:0px;width:145.5999999999999px;height:18.200000000000045px;background:#474747;"></div><div style="position:absolute;left:0px;top:18.200000000000045px;width:17px;height:179.19999999999993px;background:#5e5e5e;"></div><div style="position:absolute;left:128.5999999999999px;top:18.200000000000045px;width:17.0px;height:179.19999999999993px;background:#5e5e5e;"></div></div><svg width="10" height="9" viewBox="0 0 10 9" style="position:absolute;left:1431px;top:558.0px;overflow:visible"><clipPath id="ic14310"><rect x="0" y="0" width="9.5" height="9" rx="3"/></clipPath><g clip-path="url(#ic14310)"><rect width="9.5" height="9" fill="#a9a9a9"/><rect width="4.75" height="4.5" fill="#f2f2f2"/><rect x="4.75" y="4.5" width="4.75" height="4.5" fill="#f2f2f2"/></g></svg><div style="position:absolute;left:1449.5px;top:557.89px;font-size:11px;line-height:11px;height:11px;color:#ececec;font-weight:normal;white-space:nowrap;">Material.1</div><svg width="13" height="13" viewBox="0 0 13 13" style="position:absolute;left:1558.3px;top:556.2px;overflow:visible"><circle cx="6.5" cy="6.5" r="6.2" fill="#d6d6d6"/><text x="6.5" y="10.3" text-anchor="middle" font-family="Liberation Sans" font-weight="bold" font-size="10.5" fill="#3c3c3c">S</text></svg><svg width="10" height="10" viewBox="0 0 10 10" style="position:absolute;left:1430.6px;top:581.1px;overflow:visible"><circle cx="5" cy="5" r="4.25" fill="#5e5e5e" stroke="#7a7a7a" stroke-width="1.3"/></svg><svg width="10" height="10" viewBox="0 0 10 10" style="position:absolute;left:1430.6px;top:598.5px;overflow:visible"><circle cx="5" cy="5" r="4.25" fill="#5e5e5e" stroke="#7a7a7a" stroke-width="1.3"/></svg><svg width="10" height="10" viewBox="0 0 10 10" style="position:absolute;left:1430.6px;top:615.6px;overflow:visible"><circle cx="5" cy="5" r="5" fill="#52c27e"/></svg><svg width="10" height="10" viewBox="0 0 10 10" style="position:absolute;left:1430.6px;top:639.4px;overflow:visible"><circle cx="5" cy="5" r="4.25" fill="#77754a" stroke="#cfc452" stroke-width="1.5"/></svg><svg width="10" height="10" viewBox="0 0 10 10" style="position:absolute;left:1430.6px;top:656.6px;overflow:visible"><circle cx="5" cy="5" r="4.25" fill="#7a7a7a" stroke="#dadada" stroke-width="1.5"/></svg><svg width="10" height="10" viewBox="0 0 10 10" style="position:absolute;left:1430.6px;top:673.9px;overflow:visible"><circle cx="5" cy="5" r="4.25" fill="#6e5a80" stroke="#9c6ad8" stroke-width="1.5"/></svg><svg width="10" height="10" viewBox="0 0 10 10" style="position:absolute;left:1430.6px;top:691.5px;overflow:visible"><circle cx="5" cy="5" r="4.25" fill="#6e5a80" stroke="#9c6ad8" stroke-width="1.5"/></svg><svg width="10" height="10" viewBox="0 0 10 10" style="position:absolute;left:1430.6px;top:708.7px;overflow:visible"><circle cx="5" cy="5" r="4.25" fill="#5e5e5e" stroke="#7a7a7a" stroke-width="1.3"/></svg><svg width="10" height="10" viewBox="0 0 10 10" style="position:absolute;left:1430.6px;top:725.9px;overflow:visible"><circle cx="5" cy="5" r="4.25" fill="#5c6480" stroke="#5a78d8" stroke-width="1.5"/></svg><svg width="10" height="7" viewBox="0 0 10 7" style="position:absolute;left:1447.5px;top:581px;overflow:visible"><path d="M1 1 H7 L4 5.5 Z" fill="#d0d0d0"/></svg><div style="position:absolute;left:1458.5px;top:582.38px;font-size:10.3px;line-height:10.3px;height:10.3px;color:#e2e2e2;font-weight:normal;white-space:nowrap;">Oberfläche</div><div style="position:absolute;left:1451px;top:589px;width:1px;height:15px;background:#8c8c8c;"></div><div style="position:absolute;left:1451px;top:603.5px;width:5px;height:1px;background:#8c8c8c;"></div><svg width="10" height="7" viewBox="0 0 10 7" style="position:absolute;left:1455.5px;top:598.5px;overflow:visible"><path d="M1 1 H7 L4 5.5 Z" fill="#d0d0d0"/></svg><div style="position:absolute;left:1466.5px;top:599.78px;font-size:10.3px;line-height:10.3px;height:10.3px;color:#e2e2e2;font-weight:normal;white-space:nowrap;">Diffus</div><div style="position:absolute;left:1459px;top:606.5px;width:1px;height:14.5px;background:#8c8c8c;"></div><div style="position:absolute;left:1459px;top:620.6px;width:11px;height:1px;background:#8c8c8c;"></div><div style="position:absolute;left:1474.5px;top:616.88px;font-size:10.3px;line-height:10.3px;height:10.3px;color:#e2e2e2;font-weight:normal;white-space:nowrap;">BSDF-Ebene</div><div style="position:absolute;left:1458.5px;top:640.68px;font-size:10.3px;line-height:10.3px;height:10.3px;color:#e2e2e2;font-weight:normal;white-space:nowrap;">Abstrahlung</div><div style="position:absolute;left:1458.5px;top:657.88px;font-size:10.3px;line-height:10.3px;height:10.3px;color:#e2e2e2;font-weight:normal;white-space:nowrap;">Alpha</div><div style="position:absolute;left:1458.5px;top:675.18px;font-size:10.3px;line-height:10.3px;height:10.3px;color:#e2e2e2;font-weight:normal;white-space:nowrap;">Normale</div><div style="position:absolute;left:1458.5px;top:692.78px;font-size:10.3px;line-height:10.3px;height:10.3px;color:#e2e2e2;font-weight:normal;white-space:nowrap;">Displacement</div><div style="position:absolute;left:1458.5px;top:709.98px;font-size:10.3px;line-height:10.3px;height:10.3px;color:#e2e2e2;font-weight:normal;white-space:nowrap;">AOV</div><div style="position:absolute;left:1458.5px;top:727.18px;font-size:10.3px;line-height:10.3px;height:10.3px;color:#e2e2e2;font-weight:normal;white-space:nowrap;">Kontext</div><svg width="1324" height="804.4" viewBox="0 0 1324 804.4" style="position:absolute;left:286px;top:101.6px;overflow:visible"><path d="M118.0 36.4 L122.0 36.4 C194.0 36.4 98.0 490.8 170.0 490.8" fill="none" stroke="#c4923a" stroke-width="1.7"/><path d="M118.0 103.6 L122.0 103.6 C148.0 103.6 145.5 281.3 171.5 281.3" fill="none" stroke="#c4923a" stroke-width="1.7"/><path d="M118.0 56.4 L122.0 56.4 C452.0 56.4 442.3 538.0 772.3 538.0" fill="none" stroke="#c4923a" stroke-width="1.7"/><path d="M118.0 123.6 L122.0 123.6 C446.0 123.6 448.3 590.0 772.3 590.0" fill="none" stroke="#c4923a" stroke-width="1.7"/><path d="M342.8 212.2 C358.8 212.2 359.0 225.8 375.0 225.8" fill="none" stroke="#c09038" stroke-width="1.4"/><path d="M523.7 208.9 C541.7 208.9 536.0 276.8 554.0 276.8" fill="none" stroke="#c09038" stroke-width="1.4"/><path d="M340.5 422.1 C352.5 422.1 355.0 440.4 367.0 440.4" fill="none" stroke="#c09038" stroke-width="1.4"/><path d="M755.2 190.8 C809.2 190.8 718.3 520.8 772.3 520.8" fill="none" stroke="#c09038" stroke-width="1.4"/><path d="M567.2 423.0 C671.2 423.0 668.3 572.7 772.3 572.7" fill="none" stroke="#c09038" stroke-width="1.4"/><path d="M919.6 468.9 C935.6 468.9 935.3 501.6 951.3 501.6" fill="none" stroke="#c09038" stroke-width="1.4"/><path d="M1096.8 484.7 C1114.8 484.7 1124.0 519.0 1142.0 519.0" fill="none" stroke="#d0d0d0" stroke-width="1.1"/></svg><svg width="199" height="119" viewBox="0 0 199 119" style="position:absolute;left:1409.3px;top:784.2px;overflow:visible"><rect x="0.5" y="0.5" width="198" height="118" fill="#333" stroke="#707070" stroke-width="1"/><rect x="25.2" y="25.9" width="26.0" height="28.9" fill="#4a4a4a" stroke="#d79a34" stroke-width="1.4"/><rect x="55.8" y="25.3" width="22.1" height="11.0" fill="#4a4a4a" stroke="#d79a34" stroke-width="1.4"/><rect x="82.2" y="22.7" width="30.6" height="21.4" fill="#4a4a4a" stroke="#d79a34" stroke-width="1.4"/><rect x="25.2" y="57.3" width="26.0" height="29.0" fill="#4a4a4a" stroke="#d79a34" stroke-width="1.4"/><rect x="54.5" y="57.3" width="30.5" height="21.0" fill="#4a4a4a" stroke="#d79a34" stroke-width="1.4"/><rect x="115.2" y="53.7" width="22.0" height="37.2" fill="#4a4a4a" stroke="#d79a34" stroke-width="1.4"/><rect x="142.4" y="66.8" width="21.8" height="20.7" fill="#4a4a4a"/><rect x="170.7" y="67.3" width="21.6" height="28.5" fill="#4a4a4a"/></svg><div style="position:absolute;left:1624px;top:76px;width:278px;height:830px;background:#3c3c3c;"></div><div style="position:absolute;left:1900px;top:22px;width:2px;height:884px;background:#2a2a2a;"></div><div style="position:absolute;left:1630px;top:77px;width:113px;height:17px;background:#555555;border-radius:2px;"></div><div style="position:absolute;left:1630px;top:77px;width:56px;height:17px;background:#8aaee0;border-radius:2px 0 0 2px;"></div><div style="position:absolute;left:1633px;top:80.87px;font-size:11.5px;line-height:11.5px;height:11.5px;color:#101a2c;font-weight:normal;white-space:nowrap;">Vorschau</div><div style="position:absolute;left:1700px;top:80.87px;font-size:11.5px;line-height:11.5px;height:11.5px;color:#d8d8d8;font-weight:normal;white-space:nowrap;">Basis</div><div style="position:absolute;left:1631.5px;top:103.67px;font-size:11.5px;line-height:11.5px;height:11.5px;color:#ececec;font-weight:bold;white-space:nowrap;">Vorschau</div><svg width="120" height="120" viewBox="0 0 120 120" style="position:absolute;left:1631px;top:121px;overflow:visible"><defs><pattern id="chk" width="14" height="14" patternUnits="userSpaceOnUse"><rect width="14" height="14" fill="#fbfbfb"/><rect x="7" width="7" height="7" fill="#e3e3e3"/><rect y="7" width="7" height="7" fill="#e3e3e3"/></pattern></defs><rect width="120" height="120" fill="url(#chk)"/><rect x="70.5" y="15.5" width="1" height="1" fill="#888888"/><rect x="72.1" y="108.1" width="0.8" height="0.8" fill="#888888"/><rect x="65.5" y="22.8" width="1.2" height="1.2" fill="#888888"/><rect x="47.3" y="102.5" width="1.4" height="1.4" fill="#222222"/><rect x="103.3" y="62.3" width="1" height="1" fill="#111111"/><rect x="19.0" y="113.9" width="0.8" height="0.8" fill="#111111"/><rect x="92.8" y="98.0" width="1.2" height="1.2" fill="#555555"/><rect x="70.8" y="109.5" width="1.4" height="1.4" fill="#888888"/><rect x="47.0" y="95.3" width="1.4" height="1.4" fill="#888888"/><rect x="104.6" y="11.6" width="1" height="1" fill="#222222"/><rect x="25.8" y="114.9" width="1.4" height="1.4" fill="#888888"/><rect x="50.1" y="99.2" width="1.2" height="1.2" fill="#555555"/><rect x="69.5" y="107.6" width="1.4" height="1.4" fill="#111111"/><rect x="117.9" y="79.9" width="1.2" height="1.2" fill="#222222"/><rect x="114.8" y="107.7" width="1.2" height="1.2" fill="#111111"/><rect x="75.3" y="117.6" width="1" height="1" fill="#555555"/><rect x="14.8" y="57.4" width="1.2" height="1.2" fill="#888888"/><rect x="40.9" y="7.9" width="0.8" height="0.8" fill="#222222"/><rect x="35.0" y="91.5" width="0.8" height="0.8" fill="#111111"/><rect x="72.0" y="90.6" width="0.8" height="0.8" fill="#888888"/><rect x="65.6" y="109.7" width="1.2" height="1.2" fill="#555555"/><rect x="118.8" y="36.9" width="1" height="1" fill="#111111"/><rect x="71.4" y="3.7" width="0.8" height="0.8" fill="#222222"/><rect x="34.7" y="31.3" width="1.4" height="1.4" fill="#111111"/><rect x="37.3" y="114.1" width="1.2" height="1.2" fill="#888888"/><rect x="54.8" y="61.9" width="1.4" height="1.4" fill="#111111"/><rect x="51.3" y="85.7" width="1.2" height="1.2" fill="#222222"/><rect x="52.1" y="30.7" width="1.2" height="1.2" fill="#555555"/><rect x="1.4" y="49.4" width="1.2" height="1.2" fill="#555555"/><rect x="44.8" y="70.1" width="0.8" height="0.8" fill="#222222"/><rect x="75.4" y="39.6" width="0.8" height="0.8" fill="#555555"/><rect x="72.5" y="33.2" width="1.2" height="1.2" fill="#888888"/><rect x="70.1" y="113.6" width="0.8" height="0.8" fill="#111111"/><rect x="29.9" y="54.3" width="1.2" height="1.2" fill="#555555"/><rect x="43.3" y="37.2" width="1" height="1" fill="#555555"/><rect x="35.7" y="44.9" width="1.2" height="1.2" fill="#111111"/><rect x="36.9" y="26.5" width="1" height="1" fill="#555555"/><rect x="39.0" y="80.7" width="1" height="1" fill="#111111"/><rect x="71.5" y="112.9" width="0.8" height="0.8" fill="#222222"/><rect x="96.4" y="114.3" width="1.4" height="1.4" fill="#111111"/><rect x="88.3" y="25.9" width="1.2" height="1.2" fill="#888888"/><rect x="26.8" y="14.4" width="1.2" height="1.2" fill="#222222"/><rect x="96.0" y="99.8" width="1.2" height="1.2" fill="#222222"/><rect x="40.5" y="98.5" width="1.2" height="1.2" fill="#111111"/><rect x="70.1" y="50.1" width="1.2" height="1.2" fill="#555555"/><rect x="41.2" y="49.6" width="1.4" height="1.4" fill="#888888"/><rect x="4.2" y="49.2" width="1.4" height="1.4" fill="#222222"/><rect x="56.8" y="99.1" width="0.8" height="0.8" fill="#888888"/><rect x="3.8" y="54.3" width="1" height="1" fill="#555555"/><rect x="105.9" y="102.5" width="1.2" height="1.2" fill="#555555"/><rect x="96.4" y="5.4" width="0.8" height="0.8" fill="#222222"/><rect x="68.7" y="1.6" width="1.4" height="1.4" fill="#111111"/><rect x="59.9" y="28.4" width="1" height="1" fill="#111111"/><rect x="6.3" y="108.7" width="1.4" height="1.4" fill="#111111"/><rect x="14.9" y="115.7" width="1.2" height="1.2" fill="#888888"/><rect x="41.9" y="23.5" width="0.8" height="0.8" fill="#111111"/><rect x="28.5" y="32.6" width="1" height="1" fill="#222222"/><rect x="58.0" y="67.9" width="0.8" height="0.8" fill="#888888"/><rect x="90.0" y="29.5" width="0.8" height="0.8" fill="#888888"/><rect x="56.3" y="92.4" width="0.8" height="0.8" fill="#111111"/><rect x="92.3" y="5.5" width="0.8" height="0.8" fill="#111111"/><rect x="57.5" y="3.9" width="0.8" height="0.8" fill="#111111"/><rect x="37.6" y="37.4" width="1.4" height="1.4" fill="#555555"/><rect x="77.0" y="69.8" width="1.4" height="1.4" fill="#555555"/><rect x="22.7" y="39.1" width="1.2" height="1.2" fill="#111111"/><rect x="66.1" y="85.2" width="1" height="1" fill="#888888"/><rect x="67.4" y="5.1" width="0.8" height="0.8" fill="#888888"/><rect x="75.8" y="5.2" width="1.4" height="1.4" fill="#888888"/><rect x="44.3" y="59.0" width="0.8" height="0.8" fill="#555555"/><rect x="113.1" y="49.8" width="1.4" height="1.4" fill="#111111"/><rect x="26.0" y="32.1" width="1" height="1" fill="#111111"/><rect x="26.7" y="15.5" width="1.4" height="1.4" fill="#111111"/><rect x="44.5" y="106.8" width="1.2" height="1.2" fill="#555555"/><rect x="55.2" y="14.7" width="0.8" height="0.8" fill="#888888"/><rect x="87.3" y="67.1" width="0.8" height="0.8" fill="#111111"/><rect x="56.4" y="28.1" width="0.8" height="0.8" fill="#888888"/><rect x="62.7" y="67.2" width="0.8" height="0.8" fill="#888888"/><rect x="97.5" y="40.6" width="1" height="1" fill="#111111"/><rect x="100.4" y="80.2" width="0.8" height="0.8" fill="#555555"/><rect x="95.1" y="4.3" width="1.2" height="1.2" fill="#222222"/><rect x="66.0" y="11.9" width="0.8" height="0.8" fill="#111111"/><rect x="103.5" y="21.5" width="1.2" height="1.2" fill="#111111"/><rect x="118.8" y="76.9" width="1" height="1" fill="#888888"/><rect x="30.1" y="71.3" width="1.4" height="1.4" fill="#555555"/><rect x="115.0" y="44.7" width="1.4" height="1.4" fill="#222222"/><rect x="100.4" y="115.1" width="1.4" height="1.4" fill="#888888"/><rect x="18.6" y="47.7" width="1.4" height="1.4" fill="#222222"/><rect x="11.4" y="89.0" width="1" height="1" fill="#888888"/><rect x="16.2" y="89.5" width="1" height="1" fill="#222222"/><rect x="111.2" y="101.3" width="1.2" height="1.2" fill="#555555"/><rect x="70.8" y="69.6" width="1.4" height="1.4" fill="#555555"/><rect x="36.6" y="31.9" width="1" height="1" fill="#888888"/><rect x="20.5" y="42.9" width="1" height="1" fill="#555555"/><rect x="92.1" y="17.1" width="1.4" height="1.4" fill="#888888"/><rect x="55.7" y="99.3" width="1" height="1" fill="#111111"/><rect x="118.1" y="8.6" width="1.4" height="1.4" fill="#888888"/><rect x="55.6" y="27.3" width="0.8" height="0.8" fill="#222222"/><rect x="114.1" y="101.6" width="0.8" height="0.8" fill="#222222"/><rect x="92.3" y="16.4" width="1" height="1" fill="#111111"/><rect x="20.2" y="5.4" width="1.2" height="1.2" fill="#222222"/><rect x="10.8" y="95.1" width="1.4" height="1.4" fill="#111111"/><rect x="31.4" y="108.7" width="0.8" height="0.8" fill="#111111"/><rect x="53.8" y="87.4" width="1.2" height="1.2" fill="#555555"/><rect x="3.5" y="39.4" width="0.8" height="0.8" fill="#888888"/><rect x="9.3" y="76.7" width="1.4" height="1.4" fill="#888888"/><rect x="14.9" y="37.9" width="1.4" height="1.4" fill="#555555"/><rect x="79.2" y="13.4" width="0.8" height="0.8" fill="#555555"/><rect x="62.8" y="83.4" width="0.8" height="0.8" fill="#555555"/><rect x="35.2" y="80.4" width="1.4" height="1.4" fill="#555555"/><rect x="89.7" y="114.4" width="0.8" height="0.8" fill="#111111"/><rect x="3.3" y="3.3" width="33.6" height="15.4" rx="2.5" fill="#777777"/><text x="6.3" y="15.2" font-family="Liberation Sans" font-size="11.5" fill="#d6d6d6">Node</text></svg><svg width="121" height="119" viewBox="0 0 121 119" style="position:absolute;left:1753.6px;top:120.7px;overflow:hidden"><defs>
<radialGradient id="sph" cx="0.36" cy="0.4" r="0.72"><stop offset="0" stop-color="#ffffff"/><stop offset="0.45" stop-color="#f0f0f0"/><stop offset="0.75" stop-color="#d4d6d8"/><stop offset="0.92" stop-color="#a9b4c0"/><stop offset="1" stop-color="#8796a6"/></radialGradient>
<pattern id="wall" width="32" height="32" patternUnits="userSpaceOnUse" x="-6" y="-4"><rect width="32" height="32" fill="#a2a8b0"/><rect width="16" height="16" fill="#767c84"/><rect x="16" y="16" width="16" height="16" fill="#767c84"/></pattern>
<linearGradient id="fl" x1="0" y1="0" x2="0" y2="1"><stop offset="0" stop-color="#8c96a2"/><stop offset="1" stop-color="#a4aeb8"/></linearGradient>
<filter id="nz" x="0" y="0" width="100%" height="100%"><feTurbulence type="fractalNoise" baseFrequency="1.2" numOctaves="1" seed="4"/><feColorMatrix values="0 0 0 0 0.3  0 0 0 0 0.3  0 0 0 0 0.35  0 0 0 -1.6 0.9"/><feComposite in2="SourceGraphic" operator="in"/></filter>
<clipPath id="sc"><circle cx="60" cy="59.5" r="51.8"/></clipPath>
</defs>
<rect width="121" height="119" fill="url(#wall)"/>
<rect y="78" width="121" height="41" fill="url(#fl)"/>
<path d="M0 84 H121 M0 92 H121 M0 101 H121 M0 111 H121" stroke="#6e7884" stroke-width="3"/>
<path d="M10 78 L-10 119 M30 78 L20 119 M50 78 L48 119 M70 78 L76 119 M90 78 L104 119 M110 78 L130 119" stroke="#7a8490" stroke-width="6" opacity="0.5"/>
<circle cx="60" cy="59.5" r="51.8" fill="url(#sph)"/>
<rect width="121" height="119" fill="#000" filter="url(#nz)" clip-path="url(#sc)" opacity="0.55"/>
<rect x="3.4" y="3" width="48" height="15.3" rx="2.5" fill="#555555" opacity="0.85"/><text x="6.3" y="15" font-family="Liberation Sans" font-size="11.5" fill="#dcdcdc">Material</text></svg></div></body></html>
